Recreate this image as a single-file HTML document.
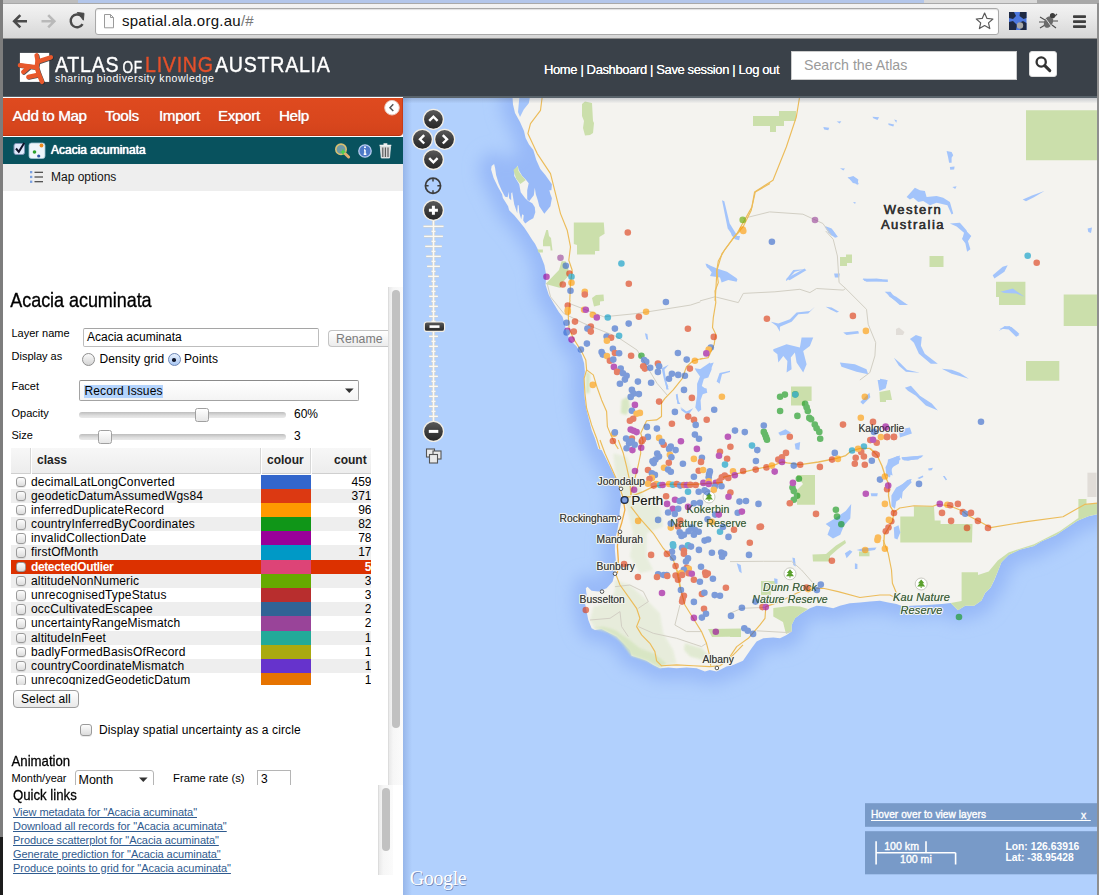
<!DOCTYPE html>
<html lang="en"><head><meta charset="utf-8"><title>Spatial Portal | Atlas of Living Australia</title>
<style>
*{box-sizing:border-box;margin:0;padding:0}
html,body{width:1099px;height:895px;overflow:hidden;background:#fff}
body{position:relative;font-family:"Liberation Sans",sans-serif;font-size:12px;color:#000}
.a{position:absolute;white-space:nowrap}
#tabs{left:0;top:0;width:1099px;height:4px;background:#d9d9d9}
#tabs i{position:absolute;top:0;height:3px;display:block}
#tool{left:0;top:3px;width:1099px;height:36px;background:linear-gradient(#f3f3f3,#e9e9e9 40%,#d6d6d6);border-top:1px solid #a9a9a9;border-bottom:1px solid #8c8c8c}
#url{left:95px;top:8px;width:904px;height:27px;background:#fff;border:1px solid #a9a9a9;border-radius:3px;box-shadow:inset 0 1px 1px rgba(0,0,0,.12)}
#urlt{left:122px;top:12px;font-size:15px;line-height:18px;color:#111;letter-spacing:.26px}
#urlt span{color:#777}
#hdr{left:0;top:39px;width:1097px;height:58.8px;background:#3a4149;border-bottom:2px solid #59636b}
#lb{left:0;top:0;width:3px;height:895px;background:#7d7d7d}
#rb{left:1096.5px;top:3px;width:2.5px;height:892px;background:#8f8f8f}
.logo{color:#fff;font-size:19.6px;line-height:20px;top:54.5px;transform:scaleY(1.15);transform-origin:0 16.8px;-webkit-text-stroke:.35px currentColor}
#nav{left:544px;top:62px;font-size:13px;line-height:16px;color:#fff;text-shadow:0 0 .6px #fff;letter-spacing:-.38px}
#srch{left:791px;top:51px;width:226px;height:29px;background:#fff;border:1px solid #ccc}
#srcht{left:804px;top:57px;font-size:14.2px;line-height:17px;color:#9a9a9a}
#sbtn{left:1029px;top:51px;width:28px;height:25.5px;background:#fff;border-radius:3px;border:1px solid #ddd}
#menu{left:3px;top:97.8px;width:400px;height:38.7px;background:linear-gradient(#df4a1f,#d8461d 70%,#d2421b);border-bottom:1.5px solid #b93310;border-right:1.5px solid #c73c17;border-radius:0 0 4px 0}
.mi{top:107px;font-size:15.2px;line-height:18px;color:#fff;text-shadow:0 0 1px #fff,0 1px 1px rgba(120,30,0,.5);letter-spacing:-.35px}
#lay{left:3px;top:137px;width:400px;height:27px;background:#08525e}
#layt{left:51px;top:143px;font-size:12px;line-height:14px;color:#fff;text-shadow:0 0 .8px #fff,0 0 .8px #fff}
#mo{left:3px;top:164px;width:400px;height:26.5px;background:#eeeeee}
#mot{left:51px;top:170px;font-size:12px;line-height:14px;color:#111}
.cb{border:1px solid #9a9a9a;border-radius:3px;background:linear-gradient(#fdfdfd,#dcdcdc);box-shadow:0 1px 0 rgba(0,0,0,.08)}
.lbl{font-size:11px;line-height:13px;color:#000;left:11.5px}
.t12{font-size:12px;line-height:14px}
#ttl{left:10.3px;top:287.5px;font-size:18px;line-height:22px;transform:scaleY(1.13);transform-origin:0 0;letter-spacing:-.05px;-webkit-text-stroke:.3px #000}
#inp{left:83px;top:327.5px;width:235.5px;height:19px;border:1px solid #bdbdbd;border-top-color:#a5a5a5;background:#fff;border-radius:2px}
#ren{left:328px;top:329.5px;width:60px;height:17.5px;border:1px solid #c4c4c4;border-right:none;border-radius:4px 0 0 4px;background:linear-gradient(#fff,#ececec)}
.radio{width:13px;height:13px;border-radius:50%;border:1px solid #8e8e8e;background:linear-gradient(#fafafa,#d4d4d4)}
#sel{left:79px;top:380px;width:280px;height:21px;border:1px solid #a3a3a3;border-top-color:#8a8a8a;border-radius:2px;background:linear-gradient(#ffffff,#f4f4f4)}
.trk{height:6px;border-radius:3px;background:linear-gradient(#bdbdbd,#dedede 60%,#e9e9e9);left:79px;width:207px}
.thm{width:13.5px;height:13.5px;border:1px solid #a0a0a0;border-radius:2.5px;background:linear-gradient(#ffffff,#e6e6e6)}
#th{left:11px;top:447.5px;width:360px;height:26.5px;background:linear-gradient(#f7f7f7,#ededed);border-bottom:1px solid #cfcfcf}
#th b{position:absolute;top:5.5px;font-size:12px;line-height:14px;color:#222}
#th i{position:absolute;top:0;width:1px;height:26px;background:#d6d6d6;border-right:1px solid #fff;box-sizing:content-box}
#rows{left:11px;top:474.5px;width:360px;height:210.5px;overflow:hidden}
.r{position:relative;height:14.19px;width:360px;font-size:12px;line-height:14px}
.r.g{background:#eeeeee}
.r.h{background:#dc3100;color:#fff;font-weight:bold}
.r .cb{position:absolute;left:4.5px;top:2px;width:10.5px;height:10.5px}
.r s{position:absolute;left:20px;top:0;text-decoration:none;letter-spacing:.16px}
.r.h s{letter-spacing:-.38px}
.r u{position:absolute;left:250px;top:0;width:49.5px;height:14.19px;text-decoration:none}
.r em{position:absolute;right:-0.5px;top:0;font-style:normal}
#selall{left:13px;top:690px;width:65.5px;height:17.5px;border:1px solid #9c9c9c;border-radius:4px;background:linear-gradient(#fff,#e9e9e9)}
.h2{font-size:13.2px;line-height:16px;transform:scaleY(1.16);transform-origin:0 0;-webkit-text-stroke:.25px #000}
#msel{left:74.5px;top:769.5px;width:79.5px;height:20px;border:1px solid #b5b5b5;border-radius:3px;background:#fff}
#fr{left:256.5px;top:769.5px;width:34px;height:20px;border:1px solid #b5b5b5;background:#fff}
#clip1{left:3px;top:287px;width:400px;height:498px;overflow:hidden}
#ql{left:3px;top:785px;width:400px;height:110px;background:#fff}
.lk{left:13px;font-size:11px;line-height:13px;color:#2f5b8f;text-decoration:underline;letter-spacing:-.06px}
.sbt{background:linear-gradient(90deg,#e9e9e9,#f6f6f6 30%,#fbfbfb);border-left:1px solid #dcdcdc}
.sbh{background:#c1c1c1;border-radius:4px}
</style></head>
<body>
<svg class="a" style="left:0;top:0" width="1099" height="895" viewBox="0 0 1099 895" font-family="Liberation Sans, sans-serif">
<defs><clipPath id="mc"><rect x="403" y="97" width="696" height="798"/></clipPath><filter id="bl" x="-10%" y="-10%" width="120%" height="120%"><feGaussianBlur stdDeviation="8"/></filter><filter id="b3"><feGaussianBlur stdDeviation=".5"/></filter><filter id="b2"><feGaussianBlur stdDeviation="1.200"/></filter><linearGradient id="bg" x1="0" y1="0" x2="0" y2="1"><stop offset="0" stop-color="#5c5c5c"/><stop offset=".5" stop-color="#3d3d3d"/><stop offset="1" stop-color="#262626"/></linearGradient><linearGradient id="ls" x1="0" y1="0" x2="1" y2="0"><stop offset="0" stop-color="#5f7fc0" stop-opacity=".32"/><stop offset="1" stop-color="#5f7fc0" stop-opacity="0"/></linearGradient><linearGradient id="ts" x1="0" y1="0" x2="0" y2="1"><stop offset="0" stop-color="#55627c" stop-opacity=".3"/><stop offset="1" stop-color="#55627c" stop-opacity="0"/></linearGradient></defs>
<g clip-path="url(#mc)">
<rect x="403" y="97" width="696" height="798" fill="#b1d0fd"/>
<path d="M1100 90L512.5 90L512.5 97L513 104.5L515 113L520 122L524 131L525.6 138L529 144.5L533.3 150L536.3 160.1L540.3 169.1L545.3 175.1L551.9 184.2L551.4 190.2L549.3 190.2L550.4 194.2L551.9 198.2L550.4 206.3L544.3 213.8L539.3 206.3L537.8 200.3L535.8 194.2L534.8 187.7L533.8 195.2L529.2 201.3L527.2 199.2L527.2 190.2L528.7 183.2L525.7 179.6L522.2 176.1L518.7 170.1L517.7 165.6L514.7 171.1L514.2 176.1L519.2 184.2L520.7 192.2L525.2 198.2L528.2 201.1L532.3 203.3L534.8 207.3L535.3 212.3L533.3 218.3L529.2 220.4L525.2 223.4L523.2 220.4L523.7 215.3L522.2 214.3L521.2 219.3L519.2 212.3L518.7 205.3L517.7 205.3L517.2 213.3L514.2 204.3L512.2 192.2L511.2 193.2L511.2 200.3L509.1 198.2L508.6 191.7L507.6 197.2L505.1 196.7L501.6 190.2L498.6 183.2L496.1 175.1L495.1 168.1L494.1 164.1L491.6 166.1L491.1 169.6L493.6 178.1L498.1 187.2L502.1 194.2L502.9 198L508.1 206.3L509.1 210.3L514.2 215.3L520.2 222.4L524.2 227.4L528.2 233.4L532.3 239.9L535 243.8L540 253.8L544.4 265L546.2 275L545.6 285L548.8 295L553.8 303.8L558.8 311.9L562.5 316.7L565 325L566.6 333.3L570 340L576.6 346.6L581.6 355L584.1 363.3L584.9 371.6L584.1 379.9L584.1 389.9L584.9 399.9L586.6 409.9L589.1 419.9L591.6 429.9L594.9 438.2L598.3 449L601.6 450L606.6 460L611.6 470L616.6 480L619.9 490L621.6 500L619.9 509.9L619.1 519.9L617.4 529.9L614.9 539.9L614.9 549.9L615.8 559.9L614.1 573.2L615 573.3L612.5 581.7L606.6 588.3L598.3 591.6L591.6 590.8L587.5 586.7L585.8 588.3L586.6 595L585 603.3L586.6 611.6L588.3 620L591.6 628.3L595 630L601.6 629.1L608.3 632.4L616.6 636.6L623.3 643.3L629.9 649.9L631.6 655.8L639.9 658.3L646.6 660.8L653.3 664.9L659.9 668.3L668.2 667.4L676.6 668.3L686.6 667.4L696.6 668.3L704.9 671.6L709.9 669.9L716.5 671.6L719.9 669.9L726.5 666.6L733.2 664.9L743 660.8L751.6 648.2L756.6 641.6L763.3 638.3L773.3 637.4L780 638.3L786.6 634.9L791.6 631.6L791.6 624.9L794.9 618.3L801.6 613.3L809.9 608.3L816.6 605.8L824.9 606.6L833.2 608.3L839.9 605.8L849.9 603.3L859.9 602.4L869.9 601.6L879.9 600.8L888.2 602.4L896.5 604.1L903.2 606.6L910.9 605.8L927.2 604.9L941.6 604L950.7 603.1L957.9 610.3L965.2 605.8L974.2 605.8L981.5 600.4L985.1 593.1L990.5 587.7L994.2 580.5L997.8 571.4L1001.4 562.3L1008.6 555.1L1019.5 549.7L1034 546.1L1041.2 541.5L1055.7 535.2L1066.6 527.9L1077.5 520.7L1088.3 516.2L1097.4 514.2L1100 513Z" fill="#98b9f8" stroke="#98b9f8" stroke-width="24" stroke-linejoin="round" filter="url(#bl)" opacity="1"/>
<path d="M1100 90L512.5 90L512.5 97L513 104.5L515 113L520 122L524 131L525.6 138L529 144.5L533.3 150L536.3 160.1L540.3 169.1L545.3 175.1L551.9 184.2L551.4 190.2L549.3 190.2L550.4 194.2L551.9 198.2L550.4 206.3L544.3 213.8L539.3 206.3L537.8 200.3L535.8 194.2L534.8 187.7L533.8 195.2L529.2 201.3L527.2 199.2L527.2 190.2L528.7 183.2L525.7 179.6L522.2 176.1L518.7 170.1L517.7 165.6L514.7 171.1L514.2 176.1L519.2 184.2L520.7 192.2L525.2 198.2L528.2 201.1L532.3 203.3L534.8 207.3L535.3 212.3L533.3 218.3L529.2 220.4L525.2 223.4L523.2 220.4L523.7 215.3L522.2 214.3L521.2 219.3L519.2 212.3L518.7 205.3L517.7 205.3L517.2 213.3L514.2 204.3L512.2 192.2L511.2 193.2L511.2 200.3L509.1 198.2L508.6 191.7L507.6 197.2L505.1 196.7L501.6 190.2L498.6 183.2L496.1 175.1L495.1 168.1L494.1 164.1L491.6 166.1L491.1 169.6L493.6 178.1L498.1 187.2L502.1 194.2L502.9 198L508.1 206.3L509.1 210.3L514.2 215.3L520.2 222.4L524.2 227.4L528.2 233.4L532.3 239.9L535 243.8L540 253.8L544.4 265L546.2 275L545.6 285L548.8 295L553.8 303.8L558.8 311.9L562.5 316.7L565 325L566.6 333.3L570 340L576.6 346.6L581.6 355L584.1 363.3L584.9 371.6L584.1 379.9L584.1 389.9L584.9 399.9L586.6 409.9L589.1 419.9L591.6 429.9L594.9 438.2L598.3 449L601.6 450L606.6 460L611.6 470L616.6 480L619.9 490L621.6 500L619.9 509.9L619.1 519.9L617.4 529.9L614.9 539.9L614.9 549.9L615.8 559.9L614.1 573.2L615 573.3L612.5 581.7L606.6 588.3L598.3 591.6L591.6 590.8L587.5 586.7L585.8 588.3L586.6 595L585 603.3L586.6 611.6L588.3 620L591.6 628.3L595 630L601.6 629.1L608.3 632.4L616.6 636.6L623.3 643.3L629.9 649.9L631.6 655.8L639.9 658.3L646.6 660.8L653.3 664.9L659.9 668.3L668.2 667.4L676.6 668.3L686.6 667.4L696.6 668.3L704.9 671.6L709.9 669.9L716.5 671.6L719.9 669.9L726.5 666.6L733.2 664.9L743 660.8L751.6 648.2L756.6 641.6L763.3 638.3L773.3 637.4L780 638.3L786.6 634.9L791.6 631.6L791.6 624.9L794.9 618.3L801.6 613.3L809.9 608.3L816.6 605.8L824.9 606.6L833.2 608.3L839.9 605.8L849.9 603.3L859.9 602.4L869.9 601.6L879.9 600.8L888.2 602.4L896.5 604.1L903.2 606.6L910.9 605.8L927.2 604.9L941.6 604L950.7 603.1L957.9 610.3L965.2 605.8L974.2 605.8L981.5 600.4L985.1 593.1L990.5 587.7L994.2 580.5L997.8 571.4L1001.4 562.3L1008.6 555.1L1019.5 549.7L1034 546.1L1041.2 541.5L1055.7 535.2L1066.6 527.9L1077.5 520.7L1088.3 516.2L1097.4 514.2L1100 513Z" fill="#f4f3ef"/>
<path d="M615 580L629.9 585L646.6 600L659.9 613.3L663.2 633.3L673.2 649.9L676.6 663.3L659.9 667.4L646.6 660.8L631.6 655.8L623.3 643.3L608.3 632.4L595 629.1L590 620L593.3 606.6L610 603.3L615 590Z" fill="#dfe9cf" opacity="0.6" filter="url(#b2)"/>
<path d="M591.6 628.3L601.6 629.1L616.6 636.6L631.6 655.8L646.6 660.8L659.9 668.3L666.6 663.3L653.3 653.3L639.9 648.3L629.9 639.9L615 630L603.3 626.6Z" fill="#d3e4bb" opacity="0.7" filter="url(#b2)"/>
<path d="M684.9 643.3L701.5 648.3L709.9 656.6L703.2 659.9L689.9 656.6L684.1 649.9Z" fill="#dfe9cf" opacity="0.9" filter="url(#b2)"/>
<path d="M613.3 453.3L626.6 456.7L633.3 473.3L643.2 495L659.9 506.6L663.2 526.6L646.6 533.3L646.6 556.6L653.2 569.9L639.9 573.2L629.9 556.6L633.3 533.3L626.6 506.6L619.9 486.6L614.9 470Z" fill="#e2ebd5" opacity="0.7" filter="url(#b2)"/>
<path d="M585.8 371.6L589.9 373.3L589.6 393.3L585.8 393.3Z" fill="#d6e6c0" opacity="0.9" filter="url(#b2)"/>
<path d="M621.6 399.9L628.2 396.6L629.9 406.6L626.6 414.9L620.7 413.2Z" fill="#d6e6c0" opacity="0.9" filter="url(#b2)"/>
<path d="M1026 110.3L1100 110.3L1100 160.3L1026 160.3Z" fill="#cbdfab"/>
<path d="M1063.7 294.5L1100 294.5L1100 326L1063.7 326Z" fill="#cbdfab"/>
<path d="M996 281.8L1025.4 281.8L1025.4 305L999 305L999 297L996 297Z" fill="#cbdfab"/>
<path d="M1026 361L1059.3 361L1059.3 380.7L1026 380.7Z" fill="#cbdfab"/>
<path d="M929.5 256L943.5 256L943.5 267L929.5 267Z" fill="#cbdfab"/>
<path d="M840 257L846 257L846 254.5L852 254.5L852 263L847 263L847 266L840 266Z" fill="#cbdfab"/>
<path d="M753 116L779 116L779 111L796 111L796 121L784 121L784 126L776 126L776 132L770 132L770 126L753 126Z" fill="#cbdfab"/>
<path d="M791 386.4L811.6 386.4L811.6 401L805 401L805 405.5L791 405.5Z" fill="#cbdfab"/>
<path d="M797 475L815 475L815 504.8L797 504.8L797 490L803 484L800 480L797 482Z" fill="#cbdfab"/>
<path d="M879.4 392L890 390L892 400L886 400L886 402L880 402Z" fill="#cbdfab"/>
<path d="M573.8 222.6L603.8 222.6L604.6 233.8L599.4 237L599.4 251L595 251L595 254.5L577 254.5L577 245L573.8 244Z" fill="#cbdfab"/>
<path d="M543 240.6L546.3 230L548 230L549 236L551 238L552.5 250.6L550.6 250.6L550.2 246.3L543 246.3Z" fill="#cbdfab"/>
<path d="M545.5 284L559 270L561.6 261.3L565.6 261.3L568.4 269L568.4 276L563 282L560.5 288Z" fill="#cbdfab"/>
<path d="M537.5 249.4L542.9 249.4L542.9 252.5L538.5 252.5Z" fill="#cbdfab"/>
<path d="M592 298L596 295L603.5 294.5L604 301L600 301.5L600 305L594 306.5Z" fill="#cbdfab"/>
<path d="M513.5 170L517.7 166L518.5 171L522 176L525.8 180L520.3 184L516 178.5Z" fill="#cbdfab"/>
<path d="M582 104L585 101.5L592 103L593 121L594 123L593 133L590 135L585 135.5L583 128L584 121L582 116Z" fill="#cbdfab"/>
<path d="M900.3 516.4L913.9 516.4L913.9 506.3L934 506.3L934.7 520.5L940.6 520.5L940.6 524L972.5 524L972 542.4L900.3 542.4Z" fill="#cbdfab"/>
<path d="M961.6 572.3L978 572.3L978 575L988.7 571.4L997.8 560.5L1008.6 552.4L1034 544.2L1060 531L1078.4 518L1078.4 499L1086.5 499L1086.5 504.4L1098 503L1098 514L1088.3 516.2L1077.5 520.7L1066.6 528L1055.7 535.2L1041.2 541.5L1034 546L1019.5 549.7L1008.6 555L1001.4 562.3L997.8 571.4L994 580.5L990.5 587.7L985 593L981.5 600.4L974.2 605.8L965.2 605.8L958 610.3L950.7 603L961.6 601Z" fill="#cbdfab"/>
<path d="M773.3 608L790 606L800 606.5L808 609L801.6 613.3L795 618.3L791.6 625L791.6 631.6L786 634L783 622L773.3 616.5Z" fill="#cbdfab"/>
<path d="M761 581L777 581L777 590L771 590L771 595L761 595Z" fill="#cbdfab"/>
<path d="M812.5 554.5L826 554L836 545.5L845 540L846 543L838 549L830 556L830 561.6L813 561.6Z" fill="#cbdfab"/>
<path d="M859 551.5L869.5 551.5L869.5 556.3L859 556.3Z" fill="#cbdfab"/>
<path d="M730 629L741 629L741 637L730 637Z" fill="#cbdfab"/>
<path d="M708 629L741 628.5L741 636.5L712 637Z" fill="#cbdfab"/>
<path d="M1087.4 472.7L1096.5 472.7L1096.5 497L1087.4 497Z" fill="#e1ddd8"/>
<path d="M896 329L899 327.5L904.5 332L903 335L896 335Z" fill="#e1ddd8"/>
<path d="M773.3 349.2L786.6 344.2L799.9 347.6L801.6 337.6L813.2 337.6L809.9 345.9L803.2 350.9L806.6 364.2L803.2 372.5L796.6 362.6L794.9 352.6L790.8 357.6L791.6 369.2L786.6 372.5L787.4 360.9L783.3 355.9L778.3 362.6L777.4 354.2L773.3 350.9Z" fill="#a3c4fb"/>
<path d="M770.8 321.8L778.3 323.4L789.9 319.3L796.6 312.6L809.9 310.9L814.9 306.8L808.2 313.4L798.3 314.3L791.6 321.8L779.9 326.8L779.9 331.7L776.6 325.9Z" fill="#a3c4fb"/>
<path d="M706.7 263.5L716.7 271L726.6 274.3L737.5 279.3L736.6 281.8L728.3 280.1L721.6 282.6L720 277.6L710 276L711.7 272.6L706.7 266Z" fill="#a3c4fb"/>
<path d="M839.9 362.6L854.9 364.2L866.5 369.2L868.2 374.2L856.5 371.7L841.5 366.7Z" fill="#a3c4fb"/>
<path d="M785.8 280.1L793.3 270.1L804.9 269.3L794.9 271.8L786.6 281Z" fill="#a3c4fb"/>
<path d="M862.4 279.3L876.5 278.5L882.3 279.3L881.5 281L866.5 281.8Z" fill="#a3c4fb"/>
<path d="M843.2 332.6L858.2 330.9L859 333.4L846.5 335.1Z" fill="#a3c4fb"/>
<path d="M700 369.2L710 362.6L711.7 369.2L708.3 377.5L700 380Z" fill="#a3c4fb"/>
<path d="M730.8 231L735.8 236L740 236L739.1 240.2L735 239.3L731.6 235.2Z" fill="#a3c4fb"/>
<path d="M834.1 273.5L839.9 273.5L839.1 277.6L834.9 277.6Z" fill="#a3c4fb"/>
<path d="M825.7 306.8L831.6 307.6L839.1 311.8L836.6 312.6L829.9 309.3Z" fill="#a3c4fb"/>
<path d="M909.9 338.9L915.9 334.9L921.8 336.9L920.9 345.8L924.8 353.8L937.8 363.8L930.8 363.8L918.9 353.8L913.9 342.8Z" fill="#a3c4fb"/>
<path d="M893.9 357.8L899.9 362.8L906.9 369.7L919.9 372.7L905.9 371.7L898.9 365.8Z" fill="#a3c4fb"/>
<path d="M941.8 368.8L951.7 369.7L959.7 372.7L968.7 378.7L958.7 375.7L951.7 373.7Z" fill="#a3c4fb"/>
<path d="M904.9 387.7L910.9 385.7L919.9 395.7L931.8 403.6L937.8 410.6L925.8 405.6L915.9 395.7L907.9 390.7Z" fill="#a3c4fb"/>
<path d="M998.6 330.9L1004.6 325.9L1011.5 326.9L1019.5 333.9L1015.5 333.9L1009.5 328.9L1004.6 327.9Z" fill="#a3c4fb"/>
<path d="M880 378.7L886 379.7L887 383.7L880 385.7Z" fill="#a3c4fb"/>
<path d="M888 459.4L899.9 455.4L898.9 463.4L892 467.4L890 477.4L886 475.4Z" fill="#a3c4fb"/>
<path d="M901.9 457.4L922.8 455.4L917.9 459.4L903.9 460.4Z" fill="#a3c4fb"/>
<path d="M898.9 429.5L909.9 427.5L911.9 433.5L899.9 437.5Z" fill="#a3c4fb"/>
<path d="M824.6 226.9L832.9 230.2L837.9 236.9L831.2 235.2Z" fill="#a3c4fb"/>
<path d="M862.9 278.5L887.8 279.5L887.8 282.1L864.5 281.1Z" fill="#a3c4fb"/>
<path d="M886.2 291.8L896.2 296.8L907.8 305.1L899.5 303.5L889.5 296.8Z" fill="#a3c4fb"/>
<path d="M992.7 275.2L1002.7 266.8L1007.7 265.2L1004.4 271.8L994.4 278.5Z" fill="#a3c4fb"/>
<path d="M999.4 328.4L1009.4 326.1L1019.4 335.1L1016.1 336.8L1008.7 329.4Z" fill="#a3c4fb"/>
<path d="M1022.7 199.6L1032.7 195.2L1044.4 190.9L1034.4 196.9L1026 201.2Z" fill="#a3c4fb"/>
<path d="M786.3 278.5L804.6 268.5L806.3 270.2L789.6 280.2Z" fill="#a3c4fb"/>
<path d="M1087.6 228.5L1092 227.5L1091 232.9L1088.3 231.9Z" fill="#a3c4fb"/>
<path d="M847.9 176.9L856.2 178.6L858.9 184.2L852.9 182.9Z" fill="#a3c4fb"/>
<path d="M906.6 196.9L914.9 187.8L919.9 190.3L924.9 191.1L926.6 196.9L936.6 196.1L943.2 197.7L949.9 201.9L953.2 213.6L951.6 214.4L947.4 205.2L936.6 202.7L929.9 205.2L923.2 201.1L918.3 201.9L913.3 197.7L909.9 199.4Z" fill="#a3c4fb"/>
<path d="M946.6 151.1L951.6 152L953.2 155.3L951.6 157.8L951.6 162.8L949.1 162.8L948.2 157.8Z" fill="#a3c4fb"/>
<path d="M949.9 166.9L954.6 166.6L954.1 169.4L950.2 169.8Z" fill="#a3c4fb"/>
<path d="M949.9 223.6L959.9 222.7L966.5 230.2L968.2 236.1L970.7 236.1L966.5 243.5L962.4 239.4L964 232.7L956.6 226.6Z" fill="#a3c4fb"/>
<path d="M847.5 177.8L853.3 176.1L858.3 179.4L857.5 185.3L855 182.8L851.6 180.3Z" fill="#a3c4fb"/>
<path d="M825 226.1L831.7 228.6L837.5 236.9L835 237.7L828.3 232.7Z" fill="#a3c4fb"/>
<path d="M823.3 127L829.2 127.8L828.3 130.3L824.2 129.5Z" fill="#a3c4fb"/>
<path d="M872.5 116.7L879.1 117.3L877.5 120L873.3 118.3Z" fill="#a3c4fb"/>
<path d="M888.3 123.3L894.1 124.5L893.3 126.6L888.6 125Z" fill="#a3c4fb"/>
<path d="M836.7 121.6L841.3 121.3L839.7 123.6Z" fill="#a3c4fb"/>
<path d="M952.4 186.9L956.6 186.3L955.2 188.9Z" fill="#a3c4fb"/>
<path d="M840 168.3L845 168.6L843.3 170.6Z" fill="#a3c4fb"/>
<path d="M853 201.9L855.8 202.2L855 203.9Z" fill="#a3c4fb"/>
<path d="M894.1 119.5L896.9 120.3L896.3 122.8Z" fill="#a3c4fb"/>
<path d="M1000.4 291.8L1012.9 288.5L1024.5 296.8L1016.2 293.4L1004.6 292.9Z" fill="#a3c4fb"/>
<path d="M962.1 238.5L966.3 231L971.3 236L967.9 241L970.4 249.3L967.1 251.8L965.4 243.5Z" fill="#a3c4fb"/>
<path d="M884.7 291.8L890.5 291.8L896.3 299.3L908 305.1L899.7 305.1L891.3 297.6Z" fill="#a3c4fb"/>
<path d="M676.5 394.9L679 403.2L677.4 404.1Z" fill="#a3c4fb"/>
<path d="M664.9 378.3L668.2 386.6L666.5 389.9Z" fill="#a3c4fb"/>
<path d="M679.9 406.6L686.5 411.6L693.2 408.2L688.2 414.9Z" fill="#a3c4fb"/>
<path d="M644.9 333.3L647.4 334.1L648.2 340L646.2 339.1Z" fill="#a3c4fb"/>
<path d="M825.7 523.9L834.8 518.4L845.7 511.1L851.2 503.9L850.3 518.4L843.9 525.7L840.3 534.8L833 538.5L827.5 534.8L830.2 527.5Z" fill="#a3c4fb"/>
<path d="M877.6 380L887.6 380L885.8 388.2L879.4 390.9Z" fill="#a3c4fb"/>
<path d="M778.3 432.8L785.6 429.2L791.1 432.8L787.4 434.6L780.1 435.6Z" fill="#a3c4fb"/>
<path d="M794.7 443.8L800.2 441.9L799.3 450.1L795.6 449.2Z" fill="#a3c4fb"/>
<path d="M700 389.1L706.4 388.2L707.3 392.8L701.8 394.6Z" fill="#a3c4fb"/>
<path d="M860.3 401.9L869.4 392.8L870.3 397.3L863 404.6Z" fill="#a3c4fb"/>
<path d="M694.7 368.3L703 369.5L710.1 363.6L713.7 362.4L708.9 374.3L704.2 377.8L701.8 386.1L706.6 389.6L703 393.2L700.6 400.3L701.2 409.8L698.3 412.1L695.3 407.4L697.1 395.6L697.1 383.7L700 376.6L695.9 370.7Z" fill="#a3c4fb"/>
<path d="M661.6 368.3L668.7 364.8L664.5 369.5L666.3 381.4L668.7 389.6L666.9 389.6L663.9 379Z" fill="#a3c4fb"/>
<path d="M716.6 381.4L719.6 373.1L730 370.7L730 371.9L722 374.3L719.6 383.7Z" fill="#a3c4fb"/>
<path d="M675.8 394.4L677.6 393.8L678.7 401.5L680.5 403.9L678.1 403.9L676.4 399.1Z" fill="#a3c4fb"/>
<path d="M680.5 408L687 412.1L686.4 413.9L681.7 410.4Z" fill="#a3c4fb"/>
<path d="M885.5 467.2L889.1 460.1L897.4 456L900.9 458.9L895 463.7L891.4 469.6L892.6 475.5L889.1 474.3L886.1 473.2Z" fill="#a3c4fb"/>
<path d="M901.5 457.2L911.6 456.6L923.4 455.4L921 457.8L908 460.7L902.1 459.5Z" fill="#a3c4fb"/>
<path d="M891.4 495.6L896.2 487.4L903.3 483.8L910.4 479.1L911.6 482.6L905.6 488.5L900.9 493.3L899.7 499.2L896.2 501.6L895 508.7L891.4 506.3Z" fill="#a3c4fb"/>
<path d="M893.8 527.6L898.5 525.2L900.3 532.4L897.4 539.5L894.4 538.3Z" fill="#a3c4fb"/>
<path d="M870.7 493.3L877.8 493.3L877.2 496.2L871.3 496.2Z" fill="#a3c4fb"/>
<path d="M917.5 477.9L922.8 475.5L923.4 476.9L919.3 479.1Z" fill="#a3c4fb"/>
<path d="M928.1 468.4L932.9 467.8L931.7 470.2L928.7 470.5Z" fill="#a3c4fb"/>
<path d="M942.9 476.1L944.7 476.1L947.1 479.7L945.7 480.3Z" fill="#a3c4fb"/>
<path d="M736.7 563.3L740.8 565L741.7 573.3L739.2 571.6Z" fill="#a3c4fb"/>
<path d="M774.1 578.3L777.5 579.1L777.5 584.1L774.6 583.3Z" fill="#a3c4fb"/>
<path d="M792.4 557.5L794.9 558.3L795.8 566.6L793.3 565Z" fill="#a3c4fb"/>
<path d="M844.9 553.3L849.9 550L852.4 551.7L846.6 558.3Z" fill="#a3c4fb"/>
<path d="M854.9 563.3L857.4 564.1L857.4 569.1L854.9 569.1Z" fill="#a3c4fb"/>
<path d="M856.6 550L863.2 548.3L876.5 547.5L874.9 550L863.2 551.7Z" fill="#a3c4fb"/>
<path d="M900 486.3L907.2 480L911.8 479.1L909.1 484.5L902.7 491.7L901.8 499L900 497.2Z" fill="#a3c4fb"/>
<path d="M519.4 97L530 97L528.75 103.25L523.75 109.5L520 117L518 112Z" fill="#a3c4fb"/>
<path d="M705.4 263.5L717 268.5L727 271.8L737 278.5L733.7 280.8L723.7 276.8L715.4 271.8L707 267.5Z" fill="#a3c4fb"/>
<path d="M722 200.2L724.3 201.2L729.7 223.5L737 235.2L733.7 236.9L727.7 228.5Z" fill="#a3c4fb"/>
<path d="M700 300.9L715 296.8L738.3 302.6L743.3 293.4L774.9 291.8L799.9 289.3L809.9 292.6L816.6 288.5L843.2 290.1L845.7 288.5" fill="none" stroke="#d2cfc4" stroke-width="1"/>
<path d="M825.7 231L833.2 239.3L837.4 256L839.1 282.6L845.7 288.5L866.5 309.3L868.2 324.3L875.7 342.6L874.9 355.9L869.9 372.5L859.9 380" fill="none" stroke="#d2cfc4" stroke-width="1"/>
<path d="M743 218.5L769.6 211.9L802.9 214.2L822.9 223.5L831.2 235.2" fill="none" stroke="#d2cfc4" stroke-width="1"/>
<path d="M569.5 303.5L603.8 316.8L637.1 313.5L690.4 305.1L700.4 301.8" fill="none" stroke="#d2cfc4" stroke-width="1"/>
<path d="M547.2 283.5L550.5 296.8L563.8 313.5L583.8 323.4L617.1 336.8L637.1 350.1L657.1 383.4L667.1 395" fill="none" stroke="#d2cfc4" stroke-width="1"/>
<path d="M615 586.7L629.9 585L643.3 591.6L648.3 601.6L638.3 608.3" fill="none" stroke="#d2cfc4" stroke-width="1"/>
<path d="M638.3 626.6L653.3 633.3L676.6 638.3L701.5 646.6L706.5 643.3" fill="none" stroke="#d2cfc4" stroke-width="1"/>
<path d="M590 620L610 618.3L620 611.6L621.6 626.6L628.3 636.6" fill="none" stroke="#d2cfc4" stroke-width="1"/>
<path d="M679.9 605L674.9 625L686.6 631.6L701.5 631.6" fill="none" stroke="#d2cfc4" stroke-width="1"/>
<path d="M730 561.6L763.3 561.3L791.6 561.3L801.6 570L813.3 583.3" fill="none" stroke="#d2cfc4" stroke-width="1"/>
<path d="M730 613.3L741.7 608.3L765 607.4" fill="none" stroke="#d2cfc4" stroke-width="1"/>
<path d="M756.6 630.8L785 632.4L791.6 631.6" fill="none" stroke="#d2cfc4" stroke-width="1"/>
<path d="M542.2 97L540.5 110.3L530.5 123.6L527.9 133.6L537.2 153.6L550.5 173.6L555.5 193.6L560.5 213.6L567.2 230.2L570.5 246.9L568.8 260.2L572.2 270.2L570.5 283.5L569.8 300.1" fill="none" stroke="#ecbc5a" stroke-width="1.15" stroke-linejoin="round"/>
<path d="M770 183.6L755.3 191.9L752 206.9L737 233.5L722 253.5L717 270.2L715.4 296.8L715 300.8" fill="none" stroke="#ecbc5a" stroke-width="1.15" stroke-linejoin="round"/>
<path d="M570 300L568.3 316.7L569.1 328.3L573.3 338.3L581.6 351.6L585.8 360L586.6 369.9L584.1 378.3L584.9 393.3L586.6 408.2L591.6 424.9L596.6 438.2L599.9 449" fill="none" stroke="#ecbc5a" stroke-width="1.15" stroke-linejoin="round"/>
<path d="M586.6 369.9L593.3 374.9L597.4 388.3L601.6 399.9L606.6 411.6L607.4 426.6L610.8 434.9L615.8 444.9L618.3 449" fill="none" stroke="#ecbc5a" stroke-width="1.15" stroke-linejoin="round"/>
<path d="M703 358.3L693.2 360.8L686.5 366.6L682.4 378.3L673.2 389.9L664.9 398.3L661.5 403.2L661.5 416.6L656.6 419.9L646.6 420.7L640.7 433.2L643.2 441.5L639.9 449" fill="none" stroke="#ecbc5a" stroke-width="1.15" stroke-linejoin="round"/>
<path d="M600 440L604.9 453.3L611.6 468.3L618.3 483.3L621.6 493.3L623.3 498.3" fill="none" stroke="#ecbc5a" stroke-width="1.15" stroke-linejoin="round"/>
<path d="M618.3 440L623.3 453.3L626.6 466.6L629.9 481.6L630.8 495" fill="none" stroke="#ecbc5a" stroke-width="1.15" stroke-linejoin="round"/>
<path d="M639.9 440L640.7 453.3L638.3 465L634.9 478.3L630.8 495" fill="none" stroke="#ecbc5a" stroke-width="1.15" stroke-linejoin="round"/>
<path d="M624.1 497.5L630.8 496.6L643.2 491.6L653.2 486.6L666.6 484.1L689.9 484.6L723 482.5" fill="none" stroke="#ecbc5a" stroke-width="1.3" stroke-linejoin="round"/>
<path d="M630.8 506.6L639.9 518.3L653.2 533.3L663.2 548.2L673.2 559.9L678.2 573.2L680.7 589" fill="none" stroke="#ecbc5a" stroke-width="1.15" stroke-linejoin="round"/>
<path d="M623.3 500L624.9 509.9L621.6 523.3L618.3 533.3L617.4 546.6L618.3 559.9L617.4 573.2" fill="none" stroke="#f0ad45" stroke-width="1.3" stroke-linejoin="round"/>
<path d="M615.8 574.2L620 585L628.3 596.6L636.6 608.3L639.9 618.3L636.6 626.6L641.6 634.9L649.9 643.3L654.9 651.6L656.6 660.8L661.6 665.8L676.6 664.9L693.2 665.8L709.9 666.6L719.9 665.8L728.2 659.9L736.5 651.6L743 644.9" fill="none" stroke="#ecbc5a" stroke-width="1.15" stroke-linejoin="round"/>
<path d="M676.6 570L679.9 586.7L684.9 605L693.2 618.3L701.5 631.6L706.5 643.3L709.9 656.6L710.7 665.8" fill="none" stroke="#ecbc5a" stroke-width="1.15" stroke-linejoin="round"/>
<path d="M730 656.6L736.7 646.6L748.3 638.3L760 624.9L765 618.3L765.8 606.6L780 601.6L796.6 593.3L808.3 588.3L823.3 588.3L838.2 591.6L859.9 597.5L879.9 595L889.9 595L896.5 598.3" fill="none" stroke="#ecbc5a" stroke-width="1.15" stroke-linejoin="round"/>
<path d="M883.2 540L888.2 553.3L891.5 570L892.4 583.3L896.5 593.3" fill="none" stroke="#ecbc5a" stroke-width="1.15" stroke-linejoin="round"/>
<path d="M723 477.4L736.4 473.8L754.6 469.3L772.9 465.6L782 462L787.4 462.9L800.2 464.7L818.4 462L836.6 458.3L845.7 455.6L851.2 451L860.3 448.3L869.4 448.3L874.9 452.5" fill="none" stroke="#ecbc5a" stroke-width="1.3" stroke-linejoin="round"/>
<path d="M870.1 448.3L877.2 455.4L882 466L885.5 476.7L889.1 485L888.5 495.6L890.3 506.3L893.8 512.2L892.6 520.5L887.9 528.8L884.3 534.7L883.7 546" fill="none" stroke="#ecbc5a" stroke-width="1.3" stroke-linejoin="round"/>
<path d="M893.8 512.2L899.7 508L914 505.7L932.9 506.3L937.6 504.5L949.5 505.7L962.5 511L968.4 515.8L980 521.7L990.5 527.6L1026.7 521.6L1063 516.7L1084.7 504.4L1097.4 503.1" fill="none" stroke="#ecbc5a" stroke-width="1.15" stroke-linejoin="round"/>
<path d="M799.6 97L796.3 117L786.3 147L773 180.3L754.6 191.9L751.3 210.2L743 226.9L733 238.5" fill="none" stroke="#ecbc5a" stroke-width="1.15" stroke-linejoin="round"/>
<path d="M740 231L734.1 236.8L725 249.3L718.3 261L716.7 271L718.3 282.6L715 291L715.8 302.6L713.3 317.6L712.5 327.6L715.8 334.2L714.2 344.2L708.3 357.6L700 359.2" fill="none" stroke="#ecbc5a" stroke-width="1.15" stroke-linejoin="round"/>
<circle cx="621" cy="488.8" r="1.800" fill="#fff" stroke="#444" stroke-width=".9"/>
<circle cx="619" cy="517.8" r="1.800" fill="#fff" stroke="#444" stroke-width=".9"/>
<circle cx="620" cy="531.8" r="1.800" fill="#fff" stroke="#444" stroke-width=".9"/>
<circle cx="615" cy="573.7" r="1.800" fill="#fff" stroke="#444" stroke-width=".9"/>
<circle cx="602" cy="591.6" r="1.800" fill="#fff" stroke="#444" stroke-width=".9"/>
<circle cx="716.9" cy="668" r="1.800" fill="#fff" stroke="#444" stroke-width=".9"/>
<circle cx="624.600" cy="500" r="3.300" fill="#fff" stroke="#222" stroke-width="1.600"/>
<g stroke="#f4f3ef" stroke-width="2.200" paint-order="stroke" stroke-linejoin="round"><text x="597.5" y="484.6" font-size="10.3" fill="#3c3c3c">Joondalup</text><text x="631.5" y="504.6" font-size="13.2" fill="#222">Perth</text><text x="559.6" y="521.6" font-size="10.3" fill="#3c3c3c">Rockingham</text><text x="596.6" y="543.3" font-size="10.3" fill="#3c3c3c">Mandurah</text><text x="596.6" y="569.6" font-size="10.3" fill="#3c3c3c">Bunbury</text><text x="579.6" y="603" font-size="10.3" fill="#3c3c3c">Busselton</text><text x="702.4" y="663.3" font-size="10.3" fill="#3c3c3c">Albany</text><text x="858.5" y="431.5" font-size="10.3" fill="#3c3c3c">Kalgoorlie</text><g fill="#3e603c" text-anchor="middle" letter-spacing=".15"><text x="708" y="513.3" font-size="10.6" font-style="normal">Kokerbin</text><text x="708.5" y="526.6" font-size="10.6" font-style="normal">Nature Reserve</text><text x="790" y="591.3" font-size="10.6" font-style="italic">Dunn Rock</text><text x="790" y="603.3" font-size="10.5" font-style="italic">Nature Reserve</text><text x="921.5" y="601.3" font-size="11" font-style="italic">Kau Nature</text><text x="921.5" y="613.6" font-size="11" font-style="italic">Reserve</text></g></g>
<g fill="#333" font-size="13" letter-spacing="1.500" text-anchor="middle" stroke="#f4f3ef" stroke-width="2.400" paint-order="stroke">
<text x="913" y="213.500">Western</text><text x="913" y="229.200">Australia</text></g>
<g fill="#333" font-size="13" letter-spacing="1.500" text-anchor="middle" stroke="#333" stroke-width=".45">
<text x="913" y="213.500">Western</text><text x="913" y="229.200">Australia</text></g>
<circle cx="709" cy="497" r="6" fill="#fff" stroke="#c9c9c0" stroke-width="1"/>
<path d="M709 492.4l-3.200 3.800h1.800l-2.600 3.200h8l-2.600-3.200h1.800zM708.3 499.2h1.400v1.600h-1.400z" fill="#5aa02c"/>
<circle cx="790" cy="573.8" r="6" fill="#fff" stroke="#c9c9c0" stroke-width="1"/>
<path d="M790 569.2l-3.200 3.800h1.800l-2.600 3.200h8l-2.600-3.200h1.800zM789.3 576h1.400v1.600h-1.400z" fill="#5aa02c"/>
<circle cx="921.2" cy="584" r="6" fill="#fff" stroke="#c9c9c0" stroke-width="1"/>
<path d="M921.2 579.4l-3.200 3.800h1.800l-2.600 3.200h8l-2.600-3.200h1.800zM920.5 586.2h1.400v1.600h-1.400z" fill="#5aa02c"/>
<g opacity=".62">
<circle cx="627.8" cy="232.5" r="3.300" fill="#dc3912"/>
<circle cx="621.4" cy="263.5" r="3.300" fill="#0099c6"/>
<circle cx="628.8" cy="283.8" r="3.300" fill="#dc3912"/>
<circle cx="560.5" cy="257.8" r="3.300" fill="#994499"/>
<circle cx="565.8" cy="265.8" r="3.300" fill="#3366cc"/>
<circle cx="546.5" cy="276.8" r="3.300" fill="#990099"/>
<circle cx="569.5" cy="273.5" r="3.300" fill="#dc3912"/>
<circle cx="571.5" cy="276.8" r="3.300" fill="#0099c6"/>
<circle cx="571.5" cy="282.8" r="3.300" fill="#ff9900"/>
<circle cx="562.8" cy="284.5" r="3.300" fill="#dc3912"/>
<circle cx="570.5" cy="290.8" r="3.300" fill="#3366cc"/>
<circle cx="584.8" cy="291.8" r="3.300" fill="#ff9900"/>
<circle cx="584.8" cy="294.5" r="3.300" fill="#dc3912"/>
<circle cx="742.7" cy="219.9" r="3.300" fill="#66aa00"/>
<circle cx="742.7" cy="229.5" r="3.300" fill="#ff9900"/>
<circle cx="567.8" cy="305.5" r="3.300" fill="#dc3912"/>
<circle cx="567.8" cy="311.7" r="3.300" fill="#ff9900"/>
<circle cx="567.8" cy="310" r="3.300" fill="#ff9900"/>
<circle cx="584.1" cy="309.7" r="3.300" fill="#ff9900"/>
<circle cx="585.8" cy="309.7" r="3.300" fill="#990099"/>
<circle cx="592.8" cy="314.7" r="3.300" fill="#ff9900"/>
<circle cx="596.8" cy="317.5" r="3.300" fill="#990099"/>
<circle cx="607.8" cy="317.5" r="3.300" fill="#0099c6"/>
<circle cx="646.1" cy="311.7" r="3.300" fill="#ff9900"/>
<circle cx="638.9" cy="316.7" r="3.300" fill="#dc3912"/>
<circle cx="665.9" cy="302" r="3.300" fill="#3366cc"/>
<circle cx="628.7" cy="323.6" r="3.300" fill="#3366cc"/>
<circle cx="566.6" cy="322.8" r="3.300" fill="#3366cc"/>
<circle cx="575" cy="321.6" r="3.300" fill="#dc3912"/>
<circle cx="590.8" cy="326.6" r="3.300" fill="#dc3912"/>
<circle cx="587.4" cy="328.6" r="3.300" fill="#3366cc"/>
<circle cx="590.8" cy="331.6" r="3.300" fill="#dc3912"/>
<circle cx="614.9" cy="328.6" r="3.300" fill="#3366cc"/>
<circle cx="687.9" cy="328.8" r="3.300" fill="#dc3912"/>
<circle cx="567.5" cy="330.8" r="3.300" fill="#990099"/>
<circle cx="566.6" cy="332.5" r="3.300" fill="#3366cc"/>
<circle cx="573.8" cy="331.6" r="3.300" fill="#dc3912"/>
<circle cx="606.6" cy="336.6" r="3.300" fill="#3366cc"/>
<circle cx="611.1" cy="337.8" r="3.300" fill="#dc3912"/>
<circle cx="619.1" cy="335.8" r="3.300" fill="#0099c6"/>
<circle cx="606.9" cy="340.8" r="3.300" fill="#ff9900"/>
<circle cx="571.6" cy="339.6" r="3.300" fill="#990099"/>
<circle cx="586.9" cy="343.6" r="3.300" fill="#3366cc"/>
<circle cx="580.9" cy="349.6" r="3.300" fill="#3366cc"/>
<circle cx="612.9" cy="348.8" r="3.300" fill="#3366cc"/>
<circle cx="601.6" cy="352" r="3.300" fill="#3366cc"/>
<circle cx="602.8" cy="354.6" r="3.300" fill="#3366cc"/>
<circle cx="614.9" cy="353" r="3.300" fill="#dc3912"/>
<circle cx="619.1" cy="353.3" r="3.300" fill="#3366cc"/>
<circle cx="606.9" cy="356.1" r="3.300" fill="#ff9900"/>
<circle cx="609.9" cy="360.8" r="3.300" fill="#dc3912"/>
<circle cx="613.3" cy="359.6" r="3.300" fill="#3366cc"/>
<circle cx="631.1" cy="355.8" r="3.300" fill="#dc3912"/>
<circle cx="641.4" cy="355.8" r="3.300" fill="#109618"/>
<circle cx="644.1" cy="360" r="3.300" fill="#3366cc"/>
<circle cx="646.2" cy="361.9" r="3.300" fill="#3366cc"/>
<circle cx="677.9" cy="353" r="3.300" fill="#3366cc"/>
<circle cx="686.7" cy="359.6" r="3.300" fill="#3366cc"/>
<circle cx="694.9" cy="360.8" r="3.300" fill="#ff9900"/>
<circle cx="657.9" cy="363.6" r="3.300" fill="#dc3912"/>
<circle cx="659.1" cy="366.3" r="3.300" fill="#3366cc"/>
<circle cx="643.2" cy="366.3" r="3.300" fill="#dc3912"/>
<circle cx="644.9" cy="368.6" r="3.300" fill="#dc3912"/>
<circle cx="650.2" cy="367.8" r="3.300" fill="#3366cc"/>
<circle cx="657.9" cy="371.9" r="3.300" fill="#3366cc"/>
<circle cx="689.9" cy="368.6" r="3.300" fill="#dc3912"/>
<circle cx="613.9" cy="366.9" r="3.300" fill="#990099"/>
<circle cx="620.7" cy="368.6" r="3.300" fill="#3366cc"/>
<circle cx="617.1" cy="371.9" r="3.300" fill="#dc3912"/>
<circle cx="622.9" cy="373.3" r="3.300" fill="#3366cc"/>
<circle cx="626.6" cy="375.8" r="3.300" fill="#3366cc"/>
<circle cx="624.9" cy="379.6" r="3.300" fill="#3366cc"/>
<circle cx="619.9" cy="383.8" r="3.300" fill="#3366cc"/>
<circle cx="671.9" cy="373.8" r="3.300" fill="#3366cc"/>
<circle cx="678.2" cy="374.9" r="3.300" fill="#3366cc"/>
<circle cx="684.9" cy="375.8" r="3.300" fill="#3366cc"/>
<circle cx="669" cy="378.8" r="3.300" fill="#3366cc"/>
<circle cx="637.9" cy="381.6" r="3.300" fill="#3366cc"/>
<circle cx="651.1" cy="382.8" r="3.300" fill="#3366cc"/>
<circle cx="592.8" cy="384.9" r="3.300" fill="#ff9900"/>
<circle cx="684" cy="389.9" r="3.300" fill="#3366cc"/>
<circle cx="631.9" cy="389.9" r="3.300" fill="#3366cc"/>
<circle cx="633.7" cy="393.6" r="3.300" fill="#3366cc"/>
<circle cx="630.7" cy="396.9" r="3.300" fill="#3366cc"/>
<circle cx="638.9" cy="394.1" r="3.300" fill="#3366cc"/>
<circle cx="691.9" cy="397.9" r="3.300" fill="#dc3912"/>
<circle cx="659.1" cy="401.6" r="3.300" fill="#dc3912"/>
<circle cx="634.9" cy="404.9" r="3.300" fill="#990099"/>
<circle cx="631.9" cy="410.7" r="3.300" fill="#3366cc"/>
<circle cx="636.6" cy="413.7" r="3.300" fill="#ff9900"/>
<circle cx="639.9" cy="412.9" r="3.300" fill="#ff9900"/>
<circle cx="674.9" cy="411.9" r="3.300" fill="#3366cc"/>
<circle cx="688.2" cy="416.6" r="3.300" fill="#dc3912"/>
<circle cx="694" cy="419.9" r="3.300" fill="#dc3912"/>
<circle cx="633.2" cy="418.7" r="3.300" fill="#dc3912"/>
<circle cx="629.9" cy="420.7" r="3.300" fill="#dc3912"/>
<circle cx="671.9" cy="423.7" r="3.300" fill="#dc3912"/>
<circle cx="695.7" cy="424.9" r="3.300" fill="#3366cc"/>
<circle cx="646.9" cy="426.9" r="3.300" fill="#3366cc"/>
<circle cx="656.9" cy="428.6" r="3.300" fill="#3366cc"/>
<circle cx="630.7" cy="429.6" r="3.300" fill="#990099"/>
<circle cx="633.7" cy="430.7" r="3.300" fill="#990099"/>
<circle cx="636.6" cy="432.1" r="3.300" fill="#990099"/>
<circle cx="614.1" cy="433.7" r="3.300" fill="#ff9900"/>
<circle cx="614.9" cy="432.4" r="3.300" fill="#3366cc"/>
<circle cx="694.9" cy="434.6" r="3.300" fill="#3366cc"/>
<circle cx="699" cy="438.7" r="3.300" fill="#3366cc"/>
<circle cx="647.9" cy="436.9" r="3.300" fill="#3366cc"/>
<circle cx="659.1" cy="437.9" r="3.300" fill="#ff9900"/>
<circle cx="631.9" cy="438.6" r="3.300" fill="#dc3912"/>
<circle cx="626.1" cy="438.6" r="3.300" fill="#3366cc"/>
<circle cx="642.9" cy="439.6" r="3.300" fill="#dc3912"/>
<circle cx="612.9" cy="441" r="3.300" fill="#dc3912"/>
<circle cx="629.1" cy="443.2" r="3.300" fill="#3366cc"/>
<circle cx="626.6" cy="448.3" r="3.300" fill="#3366cc"/>
<circle cx="624.6" cy="500" r="3.300" fill="#3366cc"/>
<circle cx="624.1" cy="564.1" r="3.300" fill="#dc3912"/>
<circle cx="585.8" cy="610" r="3.300" fill="#dc3912"/>
<circle cx="780.1" cy="396.8" r="3.300" fill="#109618"/>
<circle cx="784.9" cy="394.6" r="3.300" fill="#109618"/>
<circle cx="795.3" cy="394.2" r="3.300" fill="#109618"/>
<circle cx="780.1" cy="411" r="3.300" fill="#109618"/>
<circle cx="797.4" cy="415.9" r="3.300" fill="#109618"/>
<circle cx="805.1" cy="403.7" r="3.300" fill="#109618"/>
<circle cx="806.6" cy="407.3" r="3.300" fill="#109618"/>
<circle cx="807.8" cy="411" r="3.300" fill="#109618"/>
<circle cx="809.3" cy="417.9" r="3.300" fill="#109618"/>
<circle cx="811.1" cy="419.2" r="3.300" fill="#109618"/>
<circle cx="814.8" cy="424.6" r="3.300" fill="#109618"/>
<circle cx="816.6" cy="428.3" r="3.300" fill="#109618"/>
<circle cx="819.3" cy="431.9" r="3.300" fill="#109618"/>
<circle cx="820.2" cy="438.7" r="3.300" fill="#109618"/>
<circle cx="763.8" cy="431.9" r="3.300" fill="#109618"/>
<circle cx="765" cy="434.6" r="3.300" fill="#109618"/>
<circle cx="766.1" cy="437.4" r="3.300" fill="#109618"/>
<circle cx="767" cy="439.7" r="3.300" fill="#109618"/>
<circle cx="798.9" cy="478.7" r="3.300" fill="#109618"/>
<circle cx="792.5" cy="487.5" r="3.300" fill="#109618"/>
<circle cx="793.8" cy="491.1" r="3.300" fill="#109618"/>
<circle cx="797.1" cy="495.7" r="3.300" fill="#109618"/>
<circle cx="793.8" cy="499.7" r="3.300" fill="#109618"/>
<circle cx="835.9" cy="509.7" r="3.300" fill="#109618"/>
<circle cx="837" cy="516.6" r="3.300" fill="#109618"/>
<circle cx="841.3" cy="524.3" r="3.300" fill="#109618"/>
<circle cx="795.3" cy="394.6" r="3.300" fill="#0099c6"/>
<circle cx="852.1" cy="450.5" r="3.300" fill="#0099c6"/>
<circle cx="863.9" cy="446.5" r="3.300" fill="#0099c6"/>
<circle cx="714.2" cy="409.7" r="3.300" fill="#3366cc"/>
<circle cx="735" cy="430.6" r="3.300" fill="#3366cc"/>
<circle cx="744.8" cy="432.1" r="3.300" fill="#3366cc"/>
<circle cx="763.8" cy="425.5" r="3.300" fill="#3366cc"/>
<circle cx="793.8" cy="465.6" r="3.300" fill="#3366cc"/>
<circle cx="834.8" cy="452.9" r="3.300" fill="#3366cc"/>
<circle cx="871.8" cy="460.7" r="3.300" fill="#3366cc"/>
<circle cx="874" cy="431.9" r="3.300" fill="#3366cc"/>
<circle cx="880" cy="479.6" r="3.300" fill="#3366cc"/>
<circle cx="706.7" cy="419.7" r="3.300" fill="#dc3912"/>
<circle cx="766.5" cy="467.4" r="3.300" fill="#dc3912"/>
<circle cx="778.3" cy="459.6" r="3.300" fill="#dc3912"/>
<circle cx="782" cy="457.4" r="3.300" fill="#dc3912"/>
<circle cx="786" cy="452.9" r="3.300" fill="#dc3912"/>
<circle cx="789.8" cy="436.8" r="3.300" fill="#dc3912"/>
<circle cx="800.2" cy="464.7" r="3.300" fill="#dc3912"/>
<circle cx="819.9" cy="466.9" r="3.300" fill="#dc3912"/>
<circle cx="832.1" cy="459.6" r="3.300" fill="#dc3912"/>
<circle cx="843" cy="424.6" r="3.300" fill="#dc3912"/>
<circle cx="855.7" cy="457.8" r="3.300" fill="#dc3912"/>
<circle cx="854.8" cy="463.8" r="3.300" fill="#dc3912"/>
<circle cx="863.9" cy="456.5" r="3.300" fill="#dc3912"/>
<circle cx="864.8" cy="464.7" r="3.300" fill="#dc3912"/>
<circle cx="861.2" cy="451.9" r="3.300" fill="#dc3912"/>
<circle cx="873" cy="421.9" r="3.300" fill="#dc3912"/>
<circle cx="874.9" cy="453.8" r="3.300" fill="#dc3912"/>
<circle cx="876.7" cy="454.7" r="3.300" fill="#dc3912"/>
<circle cx="887.1" cy="437" r="3.300" fill="#dc3912"/>
<circle cx="894" cy="437" r="3.300" fill="#dc3912"/>
<circle cx="870.3" cy="440.1" r="3.300" fill="#dc3912"/>
<circle cx="876.7" cy="442.8" r="3.300" fill="#dc3912"/>
<circle cx="789.8" cy="503.3" r="3.300" fill="#dc3912"/>
<circle cx="816" cy="513.9" r="3.300" fill="#dc3912"/>
<circle cx="761" cy="526.6" r="3.300" fill="#dc3912"/>
<circle cx="887.1" cy="489.3" r="3.300" fill="#dc3912"/>
<circle cx="894" cy="513" r="3.300" fill="#dc3912"/>
<circle cx="891.3" cy="521.2" r="3.300" fill="#dc3912"/>
<circle cx="888.5" cy="527.5" r="3.300" fill="#dc3912"/>
<circle cx="885.8" cy="531.2" r="3.300" fill="#dc3912"/>
<circle cx="721.9" cy="396.8" r="3.300" fill="#ff9900"/>
<circle cx="864.8" cy="396.8" r="3.300" fill="#ff9900"/>
<circle cx="860.8" cy="417.7" r="3.300" fill="#ff9900"/>
<circle cx="771.9" cy="465.6" r="3.300" fill="#ff9900"/>
<circle cx="837.9" cy="458.9" r="3.300" fill="#ff9900"/>
<circle cx="858.1" cy="448.7" r="3.300" fill="#ff9900"/>
<circle cx="884.9" cy="476.5" r="3.300" fill="#ff9900"/>
<circle cx="884.9" cy="503.9" r="3.300" fill="#ff9900"/>
<circle cx="888.9" cy="519.9" r="3.300" fill="#ff9900"/>
<circle cx="878" cy="537.6" r="3.300" fill="#ff9900"/>
<circle cx="880.9" cy="437" r="3.300" fill="#ff9900"/>
<circle cx="727.9" cy="436.8" r="3.300" fill="#990099"/>
<circle cx="782" cy="462" r="3.300" fill="#990099"/>
<circle cx="774.7" cy="471.6" r="3.300" fill="#990099"/>
<circle cx="792.9" cy="482.9" r="3.300" fill="#990099"/>
<circle cx="865.8" cy="493.8" r="3.300" fill="#990099"/>
<circle cx="888.2" cy="485.6" r="3.300" fill="#990099"/>
<circle cx="873" cy="439.7" r="3.300" fill="#990099"/>
<circle cx="885.8" cy="427.4" r="3.300" fill="#990099"/>
<circle cx="762.5" cy="607.1" r="3.300" fill="#dc3912"/>
<circle cx="765.8" cy="607.1" r="3.300" fill="#990099"/>
<circle cx="820.8" cy="584.6" r="3.300" fill="#3366cc"/>
<circle cx="816.9" cy="590" r="3.300" fill="#3366cc"/>
<circle cx="808.3" cy="589.1" r="3.300" fill="#ff9900"/>
<circle cx="806.6" cy="587.5" r="3.300" fill="#dc3912"/>
<circle cx="831.9" cy="560.8" r="3.300" fill="#dc3912"/>
<circle cx="865.2" cy="550" r="3.300" fill="#ff9900"/>
<circle cx="884.9" cy="548.7" r="3.300" fill="#ff9900"/>
<circle cx="877.4" cy="540" r="3.300" fill="#ff9900"/>
<circle cx="919" cy="483.9" r="3.300" fill="#3366cc"/>
<circle cx="939.8" cy="503.9" r="3.300" fill="#990099"/>
<circle cx="947.4" cy="504.8" r="3.300" fill="#ff9900"/>
<circle cx="950.2" cy="505.3" r="3.300" fill="#dc3912"/>
<circle cx="957.9" cy="503.9" r="3.300" fill="#dc3912"/>
<circle cx="942" cy="512.9" r="3.300" fill="#dc3912"/>
<circle cx="951.1" cy="520.9" r="3.300" fill="#dc3912"/>
<circle cx="962.8" cy="512" r="3.300" fill="#dc3912"/>
<circle cx="965.2" cy="513.8" r="3.300" fill="#3366cc"/>
<circle cx="971" cy="512.9" r="3.300" fill="#dc3912"/>
<circle cx="977.9" cy="520.9" r="3.300" fill="#dc3912"/>
<circle cx="967" cy="527.9" r="3.300" fill="#dc3912"/>
<circle cx="988" cy="527.9" r="3.300" fill="#dc3912"/>
<circle cx="959" cy="617" r="3.300" fill="#109618"/>
<circle cx="771.9" cy="241.8" r="3.300" fill="#3366cc"/>
<circle cx="743.3" cy="231" r="3.300" fill="#ff9900"/>
<circle cx="766.9" cy="318.8" r="3.300" fill="#dc3912"/>
<circle cx="852.9" cy="315.9" r="3.300" fill="#dc3912"/>
<circle cx="865.9" cy="330.9" r="3.300" fill="#ff9900"/>
<circle cx="713.8" cy="336.9" r="3.300" fill="#dc3912"/>
<circle cx="710.8" cy="347.6" r="3.300" fill="#3366cc"/>
<circle cx="708.7" cy="349.6" r="3.300" fill="#ff9900"/>
<circle cx="706.3" cy="353.4" r="3.300" fill="#990099"/>
<circle cx="981" cy="421.8" r="3.300" fill="#3366cc"/>
<circle cx="885.6" cy="426.5" r="3.300" fill="#990099"/>
<circle cx="887" cy="436.9" r="3.300" fill="#dc3912"/>
<circle cx="893.9" cy="436.9" r="3.300" fill="#dc3912"/>
<circle cx="815" cy="220" r="3.300" fill="#994499"/>
<circle cx="1027.7" cy="255.8" r="3.300" fill="#0099c6"/>
<circle cx="1036.7" cy="262.8" r="3.300" fill="#dc3912"/>
<circle cx="631.8" cy="441.2" r="3.300" fill="#3366cc"/>
<circle cx="641.8" cy="441.2" r="3.300" fill="#dc3912"/>
<circle cx="632.4" cy="450.1" r="3.300" fill="#990099"/>
<circle cx="641.2" cy="447.7" r="3.300" fill="#990099"/>
<circle cx="634.7" cy="444.7" r="3.300" fill="#3366cc"/>
<circle cx="663.7" cy="444.7" r="3.300" fill="#dc3912"/>
<circle cx="662" cy="441.8" r="3.300" fill="#3366cc"/>
<circle cx="680.9" cy="441.2" r="3.300" fill="#990099"/>
<circle cx="670.8" cy="446.5" r="3.300" fill="#3366cc"/>
<circle cx="669.1" cy="448.9" r="3.300" fill="#3366cc"/>
<circle cx="675.6" cy="450.1" r="3.300" fill="#3366cc"/>
<circle cx="696.9" cy="448.9" r="3.300" fill="#990099"/>
<circle cx="730.4" cy="446.7" r="3.300" fill="#dc3912"/>
<circle cx="752" cy="445.6" r="3.300" fill="#0099c6"/>
<circle cx="757.3" cy="450.1" r="3.300" fill="#3366cc"/>
<circle cx="657.2" cy="453.6" r="3.300" fill="#3366cc"/>
<circle cx="659" cy="456.6" r="3.300" fill="#3366cc"/>
<circle cx="655.5" cy="459.5" r="3.300" fill="#3366cc"/>
<circle cx="652.5" cy="461.3" r="3.300" fill="#3366cc"/>
<circle cx="653.7" cy="463.1" r="3.300" fill="#3366cc"/>
<circle cx="669.9" cy="454.8" r="3.300" fill="#ff9900"/>
<circle cx="671.4" cy="457.2" r="3.300" fill="#3366cc"/>
<circle cx="668.8" cy="462.7" r="3.300" fill="#dc3912"/>
<circle cx="682.9" cy="463.7" r="3.300" fill="#3366cc"/>
<circle cx="693.9" cy="458.9" r="3.300" fill="#ff9900"/>
<circle cx="701.9" cy="457.8" r="3.300" fill="#3366cc"/>
<circle cx="701" cy="461.9" r="3.300" fill="#dc3912"/>
<circle cx="720" cy="451.8" r="3.300" fill="#dc3912"/>
<circle cx="719" cy="455.7" r="3.300" fill="#990099"/>
<circle cx="727.1" cy="458.7" r="3.300" fill="#dc3912"/>
<circle cx="725" cy="464.6" r="3.300" fill="#0099c6"/>
<circle cx="755.9" cy="461" r="3.300" fill="#3366cc"/>
<circle cx="635" cy="471" r="3.300" fill="#990099"/>
<circle cx="648" cy="470" r="3.300" fill="#dc3912"/>
<circle cx="651.9" cy="473.2" r="3.300" fill="#3366cc"/>
<circle cx="654.9" cy="474.9" r="3.300" fill="#3366cc"/>
<circle cx="664" cy="467.8" r="3.300" fill="#ff9900"/>
<circle cx="668.1" cy="469.6" r="3.300" fill="#3366cc"/>
<circle cx="670.8" cy="471.7" r="3.300" fill="#3366cc"/>
<circle cx="698.7" cy="470.8" r="3.300" fill="#dc3912"/>
<circle cx="703.1" cy="470" r="3.300" fill="#ff9900"/>
<circle cx="709.9" cy="471.4" r="3.300" fill="#3366cc"/>
<circle cx="709.1" cy="474.3" r="3.300" fill="#3366cc"/>
<circle cx="708.7" cy="477.3" r="3.300" fill="#3366cc"/>
<circle cx="693.9" cy="476.7" r="3.300" fill="#3366cc"/>
<circle cx="733" cy="471.4" r="3.300" fill="#ff9900"/>
<circle cx="743.1" cy="471" r="3.300" fill="#dc3912"/>
<circle cx="755.7" cy="469.6" r="3.300" fill="#dc3912"/>
<circle cx="734.8" cy="475.3" r="3.300" fill="#990099"/>
<circle cx="724.7" cy="475.5" r="3.300" fill="#dc3912"/>
<circle cx="721.8" cy="477.3" r="3.300" fill="#dc3912"/>
<circle cx="728.3" cy="477.9" r="3.300" fill="#dc3912"/>
<circle cx="651.9" cy="477.9" r="3.300" fill="#ff9900"/>
<circle cx="649.5" cy="479.1" r="3.300" fill="#dc3912"/>
<circle cx="648" cy="483.8" r="3.300" fill="#ff9900"/>
<circle cx="656.3" cy="484" r="3.300" fill="#ff9900"/>
<circle cx="653.7" cy="485.6" r="3.300" fill="#dc3912"/>
<circle cx="660.2" cy="485" r="3.300" fill="#0099c6"/>
<circle cx="662.6" cy="485" r="3.300" fill="#990099"/>
<circle cx="669.1" cy="484" r="3.300" fill="#ff9900"/>
<circle cx="672.9" cy="484.8" r="3.300" fill="#0099c6"/>
<circle cx="676.8" cy="484" r="3.300" fill="#dc3912"/>
<circle cx="680.3" cy="485.6" r="3.300" fill="#3366cc"/>
<circle cx="683.9" cy="485" r="3.300" fill="#dc3912"/>
<circle cx="686.8" cy="485" r="3.300" fill="#990099"/>
<circle cx="690.4" cy="484.8" r="3.300" fill="#dc3912"/>
<circle cx="695.7" cy="485" r="3.300" fill="#dc3912"/>
<circle cx="703.4" cy="482.9" r="3.300" fill="#990099"/>
<circle cx="708.7" cy="481.4" r="3.300" fill="#ff9900"/>
<circle cx="708.7" cy="484" r="3.300" fill="#990099"/>
<circle cx="715.8" cy="482.9" r="3.300" fill="#990099"/>
<circle cx="719.4" cy="481.4" r="3.300" fill="#dc3912"/>
<circle cx="721.5" cy="486.2" r="3.300" fill="#3366cc"/>
<circle cx="714.7" cy="486.8" r="3.300" fill="#3366cc"/>
<circle cx="634.1" cy="489.7" r="3.300" fill="#990099"/>
<circle cx="688" cy="491.7" r="3.300" fill="#0099c6"/>
<circle cx="698.7" cy="491.7" r="3.300" fill="#3366cc"/>
<circle cx="704.6" cy="490.3" r="3.300" fill="#3366cc"/>
<circle cx="707" cy="492.1" r="3.300" fill="#3366cc"/>
<circle cx="713.8" cy="489.7" r="3.300" fill="#ff9900"/>
<circle cx="730.4" cy="492.5" r="3.300" fill="#dc3912"/>
<circle cx="728.5" cy="496.8" r="3.300" fill="#990099"/>
<circle cx="666.1" cy="496.2" r="3.300" fill="#dc3912"/>
<circle cx="675" cy="499.8" r="3.300" fill="#990099"/>
<circle cx="679.7" cy="501" r="3.300" fill="#3366cc"/>
<circle cx="682.9" cy="499.8" r="3.300" fill="#3366cc"/>
<circle cx="667.1" cy="503.9" r="3.300" fill="#990099"/>
<circle cx="693.9" cy="503.3" r="3.300" fill="#3366cc"/>
<circle cx="699.9" cy="502.8" r="3.300" fill="#3366cc"/>
<circle cx="688" cy="506.9" r="3.300" fill="#990099"/>
<circle cx="672.9" cy="508.7" r="3.300" fill="#990099"/>
<circle cx="678.2" cy="508.7" r="3.300" fill="#3366cc"/>
<circle cx="739.5" cy="501.6" r="3.300" fill="#3366cc"/>
<circle cx="746" cy="501" r="3.300" fill="#3366cc"/>
<circle cx="758.5" cy="503.9" r="3.300" fill="#3366cc"/>
<circle cx="668.1" cy="512.5" r="3.300" fill="#3366cc"/>
<circle cx="674.8" cy="514" r="3.300" fill="#3366cc"/>
<circle cx="658.1" cy="519.9" r="3.300" fill="#3366cc"/>
<circle cx="715.2" cy="514.6" r="3.300" fill="#3366cc"/>
<circle cx="718.8" cy="514.6" r="3.300" fill="#990099"/>
<circle cx="737.7" cy="512.8" r="3.300" fill="#3366cc"/>
<circle cx="741.9" cy="511.6" r="3.300" fill="#990099"/>
<circle cx="680.3" cy="520.5" r="3.300" fill="#dc3912"/>
<circle cx="707.6" cy="519.3" r="3.300" fill="#3366cc"/>
<circle cx="711.7" cy="521.7" r="3.300" fill="#ff9900"/>
<circle cx="638.1" cy="520.9" r="3.300" fill="#ff9900"/>
<circle cx="670.8" cy="527.6" r="3.300" fill="#ff9900"/>
<circle cx="670.8" cy="523.5" r="3.300" fill="#3366cc"/>
<circle cx="678" cy="526.4" r="3.300" fill="#dc3912"/>
<circle cx="688.6" cy="531.2" r="3.300" fill="#3366cc"/>
<circle cx="691.6" cy="527.6" r="3.300" fill="#3366cc"/>
<circle cx="695.1" cy="530" r="3.300" fill="#3366cc"/>
<circle cx="698.7" cy="531.8" r="3.300" fill="#3366cc"/>
<circle cx="693.9" cy="534.7" r="3.300" fill="#3366cc"/>
<circle cx="679.7" cy="532.4" r="3.300" fill="#3366cc"/>
<circle cx="681.5" cy="535.9" r="3.300" fill="#3366cc"/>
<circle cx="683.9" cy="534.7" r="3.300" fill="#3366cc"/>
<circle cx="720" cy="531.8" r="3.300" fill="#0099c6"/>
<circle cx="722.9" cy="527" r="3.300" fill="#3366cc"/>
<circle cx="734" cy="529.7" r="3.300" fill="#dc3912"/>
<circle cx="728.5" cy="536.9" r="3.300" fill="#3366cc"/>
<circle cx="704.6" cy="540.6" r="3.300" fill="#3366cc"/>
<circle cx="708.1" cy="539.5" r="3.300" fill="#3366cc"/>
<circle cx="672.9" cy="544.2" r="3.300" fill="#0099c6"/>
<circle cx="749.8" cy="542.8" r="3.300" fill="#dc3912"/>
<circle cx="759.6" cy="527" r="3.300" fill="#dc3912"/>
<circle cx="688" cy="545.4" r="3.300" fill="#0099c6"/>
<circle cx="673.2" cy="546" r="3.300" fill="#0099c6"/>
<circle cx="688" cy="546" r="3.300" fill="#0099c6"/>
<circle cx="682.1" cy="547.8" r="3.300" fill="#3366cc"/>
<circle cx="691" cy="546.6" r="3.300" fill="#3366cc"/>
<circle cx="683.9" cy="550.7" r="3.300" fill="#dc3912"/>
<circle cx="683.9" cy="553.7" r="3.300" fill="#dc3912"/>
<circle cx="698.9" cy="549.9" r="3.300" fill="#3366cc"/>
<circle cx="711.9" cy="552.7" r="3.300" fill="#3366cc"/>
<circle cx="721.2" cy="552.5" r="3.300" fill="#3366cc"/>
<circle cx="724.1" cy="553.7" r="3.300" fill="#3366cc"/>
<circle cx="722.1" cy="556.7" r="3.300" fill="#3366cc"/>
<circle cx="749" cy="554.9" r="3.300" fill="#3366cc"/>
<circle cx="672" cy="551.7" r="3.300" fill="#3366cc"/>
<circle cx="666.9" cy="553.9" r="3.300" fill="#dc3912"/>
<circle cx="651.1" cy="554.9" r="3.300" fill="#dc3912"/>
<circle cx="672.9" cy="557.8" r="3.300" fill="#3366cc"/>
<circle cx="688" cy="558.4" r="3.300" fill="#3366cc"/>
<circle cx="686" cy="561.6" r="3.300" fill="#3366cc"/>
<circle cx="675.6" cy="566.1" r="3.300" fill="#dc3912"/>
<circle cx="701" cy="566.7" r="3.300" fill="#3366cc"/>
<circle cx="686.8" cy="567.9" r="3.300" fill="#dc3912"/>
<circle cx="688.8" cy="568.7" r="3.300" fill="#ff9900"/>
<circle cx="683.9" cy="569.7" r="3.300" fill="#3366cc"/>
<circle cx="681.1" cy="573" r="3.300" fill="#ff9900"/>
<circle cx="688.6" cy="573.2" r="3.300" fill="#dc3912"/>
<circle cx="691.8" cy="573.8" r="3.300" fill="#990099"/>
<circle cx="705.2" cy="572.6" r="3.300" fill="#dc3912"/>
<circle cx="707.8" cy="573.5" r="3.300" fill="#dc3912"/>
<circle cx="705.8" cy="575" r="3.300" fill="#dc3912"/>
<circle cx="658.1" cy="574.4" r="3.300" fill="#3366cc"/>
<circle cx="663.7" cy="575" r="3.300" fill="#3366cc"/>
<circle cx="666.7" cy="575" r="3.300" fill="#3366cc"/>
<circle cx="667.3" cy="576" r="3.300" fill="#dc3912"/>
<circle cx="657" cy="577" r="3.300" fill="#dc3912"/>
<circle cx="637.9" cy="577" r="3.300" fill="#dc3912"/>
<circle cx="675.6" cy="575.6" r="3.300" fill="#dc3912"/>
<circle cx="678" cy="579.7" r="3.300" fill="#dc3912"/>
<circle cx="682.1" cy="575" r="3.300" fill="#dc3912"/>
<circle cx="693.9" cy="579.7" r="3.300" fill="#dc3912"/>
<circle cx="699.9" cy="581.8" r="3.300" fill="#3366cc"/>
<circle cx="712.9" cy="578.8" r="3.300" fill="#3366cc"/>
<circle cx="725.9" cy="587.8" r="3.300" fill="#dc3912"/>
<circle cx="680.9" cy="590" r="3.300" fill="#3366cc"/>
<circle cx="662" cy="593" r="3.300" fill="#990099"/>
<circle cx="683.9" cy="595.7" r="3.300" fill="#dc3912"/>
<circle cx="682.7" cy="598.7" r="3.300" fill="#dc3912"/>
<circle cx="682.1" cy="601.6" r="3.300" fill="#dc3912"/>
<circle cx="701.9" cy="594" r="3.300" fill="#dc3912"/>
<circle cx="704.4" cy="592.8" r="3.300" fill="#3366cc"/>
<circle cx="714.7" cy="595.1" r="3.300" fill="#3366cc"/>
<circle cx="720" cy="595.7" r="3.300" fill="#3366cc"/>
<circle cx="693.9" cy="601.9" r="3.300" fill="#3366cc"/>
<circle cx="704" cy="608.8" r="3.300" fill="#dc3912"/>
<circle cx="706" cy="613.8" r="3.300" fill="#3366cc"/>
<circle cx="701.9" cy="617.6" r="3.300" fill="#3366cc"/>
<circle cx="693.9" cy="617.9" r="3.300" fill="#990099"/>
<circle cx="741.9" cy="607.8" r="3.300" fill="#3366cc"/>
<circle cx="731" cy="615.9" r="3.300" fill="#3366cc"/>
<circle cx="755.5" cy="601.6" r="3.300" fill="#3366cc"/>
<circle cx="715.8" cy="631.8" r="3.300" fill="#990099"/>
<circle cx="744.3" cy="628.3" r="3.300" fill="#3366cc"/>
<circle cx="747.8" cy="630.7" r="3.300" fill="#3366cc"/>
<circle cx="753.1" cy="633.9" r="3.300" fill="#3366cc"/>
</g>
<g opacity=".6"><text x="597.5" y="484.6" font-size="10.3" fill="#3c3c3c">Joondalup</text><text x="631.5" y="504.6" font-size="13.2" fill="#222">Perth</text><text x="559.6" y="521.6" font-size="10.3" fill="#3c3c3c">Rockingham</text><text x="596.6" y="543.3" font-size="10.3" fill="#3c3c3c">Mandurah</text><text x="596.6" y="569.6" font-size="10.3" fill="#3c3c3c">Bunbury</text><text x="579.6" y="603" font-size="10.3" fill="#3c3c3c">Busselton</text><text x="702.4" y="663.3" font-size="10.3" fill="#3c3c3c">Albany</text><text x="858.5" y="431.5" font-size="10.3" fill="#3c3c3c">Kalgoorlie</text><g fill="#3e603c" text-anchor="middle" letter-spacing=".15"><text x="708" y="513.3" font-size="10.6" font-style="normal">Kokerbin</text><text x="708.5" y="526.6" font-size="10.6" font-style="normal">Nature Reserve</text><text x="790" y="591.3" font-size="10.6" font-style="italic">Dunn Rock</text><text x="790" y="603.3" font-size="10.5" font-style="italic">Nature Reserve</text><text x="921.5" y="601.3" font-size="11" font-style="italic">Kau Nature</text><text x="921.5" y="613.6" font-size="11" font-style="italic">Reserve</text></g></g>
<rect x="403" y="97" width="9" height="798" fill="url(#ls)"/>
<rect x="403" y="97.500" width="696" height="6" fill="url(#ts)"/>
<circle cx="433.4" cy="119.3" r="10" fill="url(#bg)" stroke="#f3efe6" stroke-width="1.300"/><path d="M429.2 120.9l4.200-4.200 4.200 4.200" stroke="#fff" stroke-width="2.400" fill="none"/><circle cx="422.4" cy="139.3" r="10" fill="url(#bg)" stroke="#f3efe6" stroke-width="1.300"/><path d="M424.2 135.1l-4.200 4.200 4.200 4.200" stroke="#fff" stroke-width="2.400" fill="none"/><circle cx="444.6" cy="139.3" r="10" fill="url(#bg)" stroke="#f3efe6" stroke-width="1.300"/><path d="M442.8 135.1l4.200 4.200-4.200 4.200" stroke="#fff" stroke-width="2.400" fill="none"/><circle cx="433.4" cy="159.5" r="10" fill="url(#bg)" stroke="#f3efe6" stroke-width="1.300"/><path d="M429.2 158.1l4.200 4.200 4.200-4.200" stroke="#fff" stroke-width="2.400" fill="none"/>
<circle cx="433" cy="185.800" r="7.600" fill="none" stroke="#3d3d3d" stroke-width="1.700"/><path d="M433 178.200v3.200M433 190.200v3.200M425.400 185.800h3.200M437.400 185.800h3.200" stroke="#3d3d3d" stroke-width="1.500"/>
<path d="M433.500 220V422" stroke="#d6d2c8" stroke-width="2.600"/><path d="M423.5 226.4h20M431.5 231.4h4M424.1 236.4h18.8M431.5 241.4h4M425.2 246.4h16.6M431.5 251.4h4M426.2 256.4h14.6M431.5 261.4h4M427.1 266.4h12.8M431.5 271.4h4M428.2 276.4h10.6M431.5 281.4h4M429.1 286.4h8.8M431.5 291.4h4M429.1 296.4h8.8M431.5 301.4h4M429.1 306.4h8.8M431.5 311.4h4M429.1 316.4h8.8M431.5 321.4h4M429.1 326.4h8.8M431.5 331.4h4M429.1 336.4h8.8M431.5 341.4h4M429.1 346.4h8.8M431.5 351.4h4M429.1 356.4h8.8M431.5 361.4h4M429.1 366.4h8.8M431.5 371.4h4M429.1 376.4h8.8M431.5 381.4h4M429.1 386.4h8.8M431.5 391.4h4M429.1 396.4h8.8M431.5 401.4h4M429.1 406.4h8.8M431.5 411.4h4M429.1 416.4h8.8" stroke="#d6d2c8" stroke-width="2.200" fill="none"/>
<path d="M433.500 220V422" stroke="#fbfaf6" stroke-width="1.500"/><path d="M423.5 226.4h20M431.5 231.4h4M424.1 236.4h18.8M431.5 241.4h4M425.2 246.4h16.6M431.5 251.4h4M426.2 256.4h14.6M431.5 261.4h4M427.1 266.4h12.8M431.5 271.4h4M428.2 276.4h10.6M431.5 281.4h4M429.1 286.4h8.8M431.5 291.4h4M429.1 296.4h8.8M431.5 301.4h4M429.1 306.4h8.8M431.5 311.4h4M429.1 316.4h8.8M431.5 321.4h4M429.1 326.4h8.8M431.5 331.4h4M429.1 336.4h8.8M431.5 341.4h4M429.1 346.4h8.8M431.5 351.4h4M429.1 356.4h8.8M431.5 361.4h4M429.1 366.4h8.8M431.5 371.4h4M429.1 376.4h8.8M431.5 381.4h4M429.1 386.4h8.8M431.5 391.4h4M429.1 396.4h8.8M431.5 401.4h4M429.1 406.4h8.8M431.5 411.4h4M429.1 416.4h8.8" stroke="#fbfaf6" stroke-width="1.200" fill="none"/>
<circle cx="433.4" cy="210.3" r="10" fill="url(#bg)" stroke="#f3efe6" stroke-width="1.300"/><path d="M428.9 210.3h9M433.4 205.8v9" stroke="#fff" stroke-width="3" fill="none"/><circle cx="433.5" cy="431.4" r="10" fill="url(#bg)" stroke="#f3efe6" stroke-width="1.300"/><path d="M428.8 431.4h9.500" stroke="#fff" stroke-width="3" fill="none"/>
<rect x="424.300" y="322" width="20.300" height="9.400" rx="2.500" fill="url(#bg)" stroke="#f3efe6" stroke-width="1.200"/><rect x="429.500" y="325.300" width="10" height="2.600" fill="#fff"/>
<g fill="#e9e9e9" stroke="#555" stroke-width="1.100"><rect x="426.500" y="449" width="8" height="8"/><rect x="433" y="451" width="8" height="8"/><rect x="429.500" y="454.500" width="8" height="8.500"/></g>
<g font-family="Liberation Serif, serif" font-size="20" letter-spacing="-.4"><text x="410.600" y="885.700" fill="#5d74a6" opacity=".75" filter="url(#b3)">Google</text><text x="409.800" y="885" fill="#fff">Google</text></g>
<rect x="865" y="803.200" width="232" height="23.600" fill="#789ac8"/><rect x="865" y="831.200" width="232" height="43.100" fill="#789ac8"/>
<g fill="#fff" stroke="#fff" stroke-width=".35">
<text x="871" y="817.900" font-size="10.100" textLength="115" lengthAdjust="spacing">Hover over to view layers</text>
<text x="1081" y="819.300" font-size="10.500">x</text>
<text x="901.600" y="849.900" font-size="10.600" text-anchor="middle">100 km</text><text x="915.900" y="862.700" font-size="10.600" text-anchor="middle">100 mi</text>
</g>
<path d="M871 820.500H1090.800" stroke="#fff" stroke-width="1.100"/>
<path d="M876.100 841.200V864.500M926 841.200V852.700M955.600 852.700V864.500M876.100 852.700H955.600" stroke="#fff" stroke-width="1.600" fill="none"/>
<g fill="#fff" font-size="10.300" font-weight="bold"><text x="1005.500" y="849.900">Lon: 126.63916</text><text x="1005.500" y="861">Lat: -38.95428</text></g>
</g></svg>
<div class="a" id="tabs"><i style="left:0;width:78px;background:#bdbdbd"></i><i style="left:78px;width:846px;background:#b3c6ea"></i><i style="left:1037px;width:62px;background:#a9a9a9"></i></div>
<div class="a" id="tool"></div>
<div class="a" id="url"></div>
<div class="a" id="urlt">spatial.ala.org.au<span>/#</span></div>
<svg class="a" style="left:0;top:0" width="1099" height="40" viewBox="0 0 1099 40">
<g fill="none" stroke="#4a4a4a" stroke-width="2.6" stroke-linecap="butt" stroke-linejoin="miter">
<path d="M27 21.3H14.5M20.3 15.2L14.2 21.3L20.3 27.4"/>
<path d="M41.5 21.3H54M48.2 15.2L54.3 21.3L48.2 27.4" stroke="#b9b9b9"/>
<path d="M81.5 16.2A6.4 6.4 0 1 0 82.6 24.2" stroke-width="2.4"/>
</g>
<path d="M77.3 12.5L84 13.3L83.4 20.2Z" fill="#4a4a4a" stroke="#4a4a4a" stroke-width="1"/>
<path d="M104.5 14.5h6l3 3v10.3h-9z" fill="#fbfbfb" stroke="#9a9a9a" stroke-width="1"/>
<path d="M110.5 14.5v3h3" fill="none" stroke="#9a9a9a" stroke-width="1"/>
<path d="M984.6 13l2.400 5.400 5.900.6-4.400 3.900 1.300 5.700-5.200-3-5.200 3 1.300-5.700-4.400-3.900 5.900-.6z" fill="#fff" stroke="#5a5a5a" stroke-width="1.2" stroke-linejoin="round"/>
<rect x="1009" y="12" width="17.500" height="18" fill="#4d78e0"/>
<path d="M1009 12h5l2 4-3 3-4-1zM1020 12h6.500v6l-3 1-4-3zM1009 22l4-1 4 4-1 5h-7zM1019 23l4-2 3.500 2v7h-6z" fill="#1f2a44"/>
<circle cx="1020" cy="25.500" r="3.200" fill="#a9a9a9"/>
<g stroke="#4f4f4f" stroke-width="1.100" fill="none"><path d="M1040 17l5 3M1039 22h6M1040 28l5-3M1057 14l-4 4M1058 21h-5M1056 28l-4-3"/></g>
<ellipse cx="1048.500" cy="22" rx="4.200" ry="6.200" fill="#6a6a6a" transform="rotate(28 1048.500 22)"/>
<circle cx="1052.500" cy="15.500" r="2.600" fill="#3c3c3c"/>
<path d="M1046 19l5 7" stroke="#d9d9d9" stroke-width="1"/>
<g fill="#3f3f3f"><rect x="1073" y="15.300" width="13" height="2.700" rx=".8"/><rect x="1073" y="20.300" width="13" height="2.700" rx=".8"/><rect x="1073" y="25.300" width="13" height="2.700" rx=".8"/></g>
</svg>
<div class="a" id="hdr"></div>
<svg class="a" style="left:14px;top:46px" width="44" height="44" viewBox="14 46 44 44">
<rect x="19.900" y="52.900" width="29.300" height="29" fill="#fff"/>
<g stroke-linecap="round" stroke-linejoin="round" fill="none" stroke-width="4.400">
<g stroke="#22272c" opacity=".8" transform="translate(.7 .6)"><path d="M36.600 55.300L37.600 60.800L36.600 67.200L38.600 73.500L42 81.900"/><path d="M37.600 61.700L50.900 57.300"/><path d="M35.600 67.200L19.900 65.200"/><path d="M28.800 67.200L23.300 72"/><path d="M37.600 75L28.300 77"/></g>
<g stroke="#e8582c"><path d="M36.600 55.300L37.600 60.800L36.600 67.200L38.600 73.500L42 81.900"/><path d="M37.600 61.700L50.900 57.300"/><path d="M35.600 67.200L19.900 65.200"/><path d="M28.800 67.200L23.300 72"/><path d="M37.600 75L28.300 77"/></g>
</g></svg>
<div class="a logo" style="left:55px;letter-spacing:.75px">ATLAS</div>
<div class="a logo" style="left:122.500px;font-size:13.600px;top:58.700px;letter-spacing:.6px">OF</div>
<div class="a logo" style="left:145px;color:#e5502a;letter-spacing:.75px">LIVING</div>
<div class="a logo" style="left:215px;letter-spacing:.75px">AUSTRALIA</div>
<div class="a" style="left:55px;top:71.800px;font-size:10.500px;line-height:13px;color:#fff;letter-spacing:.55px">sharing biodiversity knowledge</div>
<div class="a" id="nav">Home | Dashboard | Save session | Log out</div>
<div class="a" id="srch"></div><div class="a" id="srcht">Search the Atlas</div>
<div class="a" id="sbtn"></div>
<svg class="a" style="left:1029px;top:51px" width="28" height="26" viewBox="0 0 28 26"><circle cx="12.200" cy="11" r="4.600" fill="none" stroke="#333" stroke-width="2.300"/><path d="M15.800 14.600L20.800 19.600" stroke="#333" stroke-width="3" stroke-linecap="round"/></svg>
<div class="a" style="left:3px;top:97px;width:400px;height:798px;background:#fff"></div>
<div class="a" id="menu"></div>
<div class="a mi" style="left:12.5px">Add to Map</div>
<div class="a mi" style="left:105px">Tools</div>
<div class="a mi" style="left:159px">Import</div>
<div class="a mi" style="left:218px">Export</div>
<div class="a mi" style="left:279px">Help</div>
<svg class="a" style="left:383px;top:99px" width="18" height="18" viewBox="0 0 18 18"><circle cx="9" cy="8.700" r="7.300" fill="#fff" stroke="#e9c9bd" stroke-width="1"/><path d="M10.300 5.300L7 8.700L10.300 12.100" fill="none" stroke="#555" stroke-width="1.500"/></svg>
<div class="a" id="lay"></div>
<svg class="a" style="left:12px;top:141px" width="36" height="20" viewBox="12 141 36 20"><rect x="14" y="143.500" width="10.500" height="11" rx="2" fill="#dfe9fb" stroke="#7f93b5" stroke-width="1"/><path d="M16 148.500l2.800 3.300L24.200 143" fill="none" stroke="#10132a" stroke-width="2"/><rect x="29" y="143" width="16" height="15.500" rx="2.500" fill="#eef6fb" stroke="#9fc4d4" stroke-width=".8"/><circle cx="34.500" cy="152" r="1.800" fill="#2ca02c"/><circle cx="41.500" cy="145.500" r="1.900" fill="#ee8a1d"/><circle cx="38.700" cy="156" r="1.600" fill="#2f55a4"/></svg>
<div class="a" id="layt">Acacia acuminata</div>
<svg class="a" style="left:330px;top:140px" width="66" height="22" viewBox="330 140 66 22">
<circle cx="341" cy="149.300" r="5.200" fill="#6f9aa6" stroke="#d9c070" stroke-width="1.600"/>
<path d="M345 153.500L348.600 157" stroke="#e0b070" stroke-width="3" stroke-linecap="round"/>
<path d="M343 149.500v5M340.500 152h5" stroke="#4fd04a" stroke-width="1.700"/>
<circle cx="365" cy="151" r="6.200" fill="#4d79c7" stroke="#b9cdf0" stroke-width="1.300"/>
<path d="M365 149.800v4.200M363.700 154.300h2.700M364 150h1" stroke="#fff" stroke-width="1.500"/><circle cx="365" cy="147.300" r="1" fill="#fff"/>
<path d="M380.300 146.500h10.200l-1 11.500h-8.200z" fill="#d6d6d6" stroke="#f4f4f4" stroke-width=".8"/>
<path d="M379.500 145.500h11.800M383.500 144h3.800" stroke="#f0f0f0" stroke-width="1.500"/>
<path d="M382.800 147.500v9.500M385.400 147.500v9.500M388 147.500v9.500" stroke="#555" stroke-width="1.100"/>
</svg>
<div class="a" id="mo"></div>
<svg class="a" style="left:29px;top:169px" width="16" height="16" viewBox="0 0 16 16"><g fill="#7aa0e0"><rect x="1" y="2" width="2.300" height="2.300"/><rect x="1" y="6.800" width="2.300" height="2.300"/><rect x="1" y="11.600" width="2.300" height="2.300"/></g><path d="M5.500 3.200h8.500M5.500 8h8.500M5.500 12.800h8.500" stroke="#222" stroke-width="1.100"/></svg>
<div class="a" id="mot">Map options</div>
<div class="a sbt" style="left:388px;top:287px;width:15px;height:498px"></div>
<div class="a sbh" style="left:392px;top:290px;width:7.500px;height:437.500px"></div>
<div class="a" id="ttl">Acacia acuminata</div>
<div class="a lbl" style="top:326.500px">Layer name</div>
<div class="a" id="inp"></div><div class="a t12" style="left:87px;top:330px">Acacia acuminata</div>
<div class="a" id="ren"></div><div class="a t12" style="left:336px;top:331.500px;color:#7b7b7b;font-size:12.300px">Rename</div>
<div class="a lbl" style="top:349.500px">Display as</div>
<div class="a radio" style="left:82.200px;top:353.200px"></div><div class="a t12" style="left:99.500px;top:352px;letter-spacing:.12px">Density grid</div>
<div class="a radio" style="left:167.500px;top:353.200px;background:linear-gradient(#e8f1fd,#a9c7f3);border-color:#6c86b5"></div><div class="a" style="left:172.300px;top:358px;width:3.600px;height:3.600px;border-radius:50%;background:#12182c"></div><div class="a t12" style="left:184px;top:352px;letter-spacing:.12px">Points</div>
<div class="a lbl" style="top:379.500px">Facet</div>
<div class="a" id="sel"></div><div class="a" style="left:84px;top:384.500px;width:78.500px;height:13px;background:#b4d4fd"></div><div class="a t12" style="left:84.500px;top:384px;letter-spacing:.1px">Record Issues</div>
<svg class="a" style="left:343px;top:386px" width="12" height="9" viewBox="0 0 12 9"><path d="M2 2.500h8.600L6.300 7z" fill="#333"/></svg>
<div class="a lbl" style="top:406.500px">Opacity</div>
<div class="a trk" style="top:412px"></div><div class="a thm" style="left:195px;top:408.200px"></div><div class="a t12" style="left:294px;top:407px">60%</div>
<div class="a lbl" style="top:428.500px">Size</div>
<div class="a trk" style="top:434px"></div><div class="a thm" style="left:98px;top:430.200px"></div><div class="a t12" style="left:294px;top:429px">3</div>
<div class="a" id="th"><i style="left:19px"></i><b style="left:26px">class</b><i style="left:249px"></i><b style="left:256px">colour</b><i style="left:299px"></i><b style="left:323px">count</b></div>
<div class="a" id="rows">
<div class="r"><span class="cb"></span><s>decimalLatLongConverted</s><u style="background:#3366cc"></u><em>459</em></div>
<div class="r g"><span class="cb"></span><s>geodeticDatumAssumedWgs84</s><u style="background:#dc3912"></u><em>371</em></div>
<div class="r"><span class="cb"></span><s>inferredDuplicateRecord</s><u style="background:#ff9900"></u><em>96</em></div>
<div class="r g"><span class="cb"></span><s>countryInferredByCoordinates</s><u style="background:#109618"></u><em>82</em></div>
<div class="r"><span class="cb"></span><s>invalidCollectionDate</s><u style="background:#990099"></u><em>78</em></div>
<div class="r g"><span class="cb"></span><s>firstOfMonth</s><u style="background:#0099c6"></u><em>17</em></div>
<div class="r h"><span class="cb"></span><s>detectedOutlier</s><u style="background:#dd4477"></u><em>5</em></div>
<div class="r g"><span class="cb"></span><s>altitudeNonNumeric</s><u style="background:#66aa00"></u><em>3</em></div>
<div class="r"><span class="cb"></span><s>unrecognisedTypeStatus</s><u style="background:#b82e2e"></u><em>3</em></div>
<div class="r g"><span class="cb"></span><s>occCultivatedEscapee</s><u style="background:#316395"></u><em>2</em></div>
<div class="r"><span class="cb"></span><s>uncertaintyRangeMismatch</s><u style="background:#994499"></u><em>2</em></div>
<div class="r g"><span class="cb"></span><s>altitudeInFeet</s><u style="background:#22aa99"></u><em>1</em></div>
<div class="r"><span class="cb"></span><s>badlyFormedBasisOfRecord</s><u style="background:#aaaa11"></u><em>1</em></div>
<div class="r g"><span class="cb"></span><s>countryCoordinateMismatch</s><u style="background:#6633cc"></u><em>1</em></div>
<div class="r"><span class="cb"></span><s>unrecognizedGeodeticDatum</s><u style="background:#e67300"></u><em>1</em></div>
</div>
<div class="a" id="selall"></div><div class="a t12" style="left:21px;top:691.500px;letter-spacing:.1px">Select all</div>
<div class="a cb" style="left:80px;top:724px;width:12px;height:12px"></div><div class="a t12" style="left:99px;top:723px;letter-spacing:.13px">Display spatial uncertainty as a circle</div>
<div class="a h2" style="left:11.500px;top:751.500px">Animation</div>
<div class="a" style="left:3px;top:766px;width:385px;height:19px;overflow:hidden"><div class="a lbl" style="left:8.500px;top:6px">Month/year</div><div class="a" id="msel" style="left:71.500px;top:3.500px"></div><div class="a t12" style="left:75.500px;top:7px;font-size:12.500px">Month</div><svg class="a" style="left:134px;top:9px" width="12" height="9" viewBox="0 0 12 9"><path d="M2 2.500h8.600L6.300 7z" fill="#333"/></svg><div class="a lbl" style="left:170px;top:6px;font-size:11.300px">Frame rate (s)</div><div class="a" id="fr" style="left:253.500px;top:3.500px"></div><div class="a t12" style="left:258px;top:6px">3</div></div>
<div class="a" id="ql"></div>
<div class="a sbt" style="left:378px;top:785px;width:15px;height:89.500px"></div>
<div class="a sbh" style="left:382px;top:788px;width:8px;height:63px"></div>
<div class="a h2" style="left:13px;top:785.500px">Quick links</div>
<div class="a lk" style="top:805.5px">View metadata for "Acacia acuminata"</div>
<div class="a lk" style="top:819.5px">Download all records for "Acacia acuminata"</div>
<div class="a lk" style="top:833.5px">Produce scatterplot for "Acacia acuminata"</div>
<div class="a lk" style="top:847.5px">Generate prediction for "Acacia acuminata"</div>
<div class="a lk" style="top:861.5px">Produce points to grid for "Acacia acuminata"</div>
<div class="a" id="lb"></div><div class="a" style="left:0;top:837px;width:3px;height:58px;background:#1c1c1c"></div>
<div class="a" id="rb"></div>
</body></html>
